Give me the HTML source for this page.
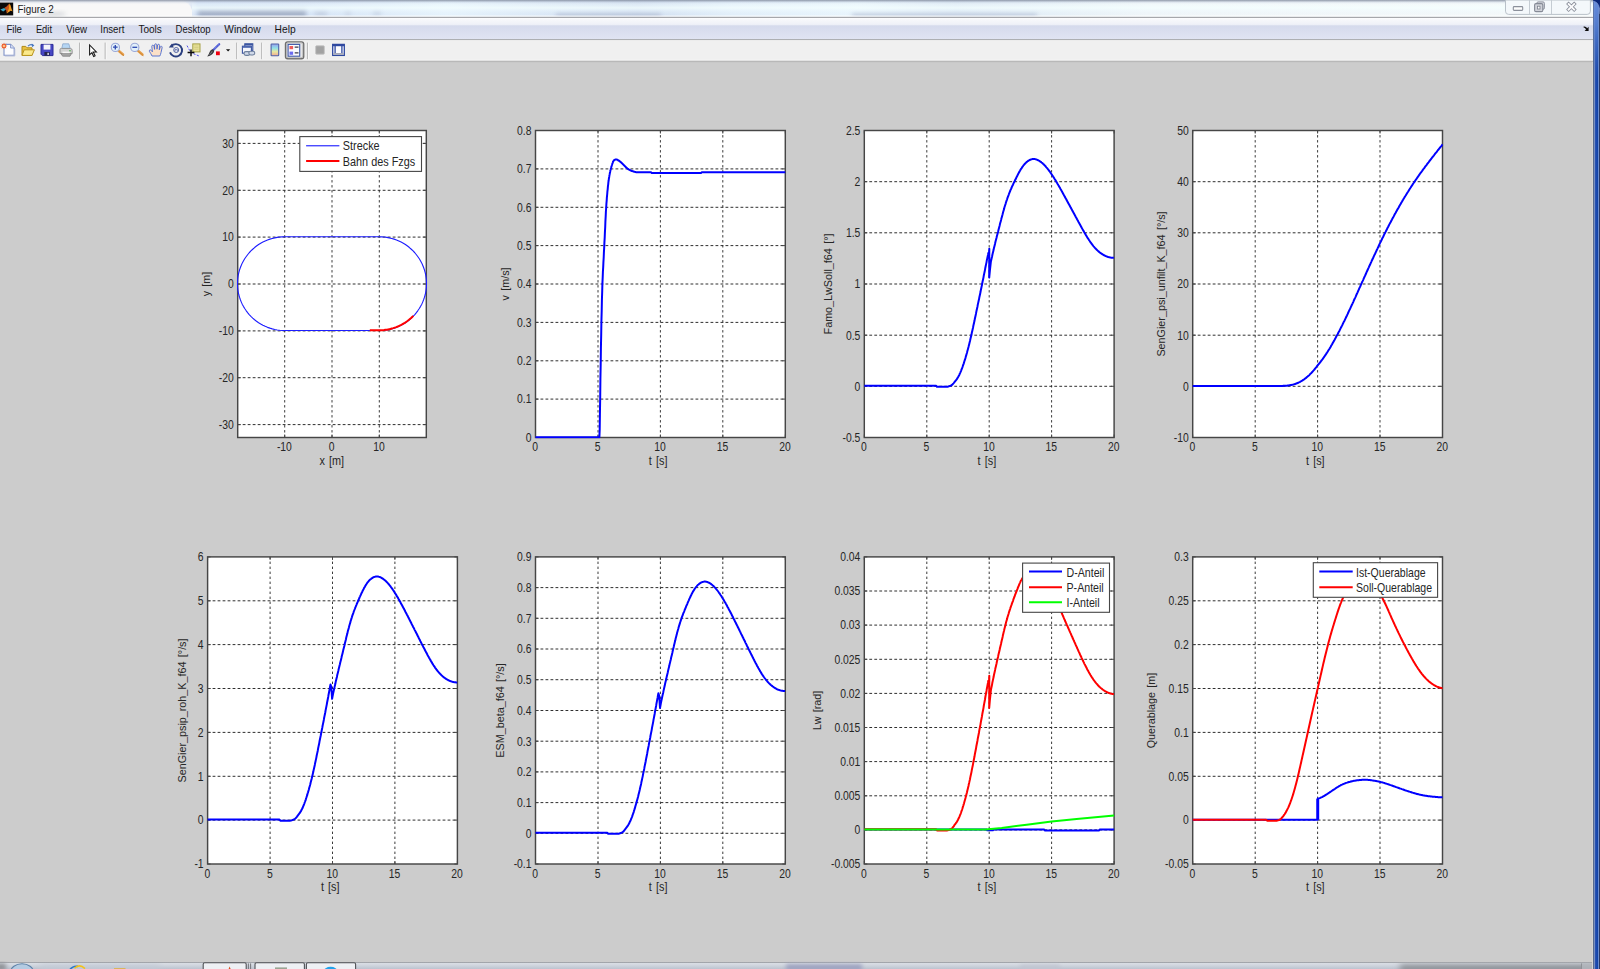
<!DOCTYPE html>
<html><head><meta charset="utf-8"><title>Figure 2</title>
<style>
html,body{margin:0;padding:0;}
body{width:1600px;height:969px;overflow:hidden;position:relative;background:#cccccc;font-family:"Liberation Sans", sans-serif;}
#plots text{white-space:pre;}

</style></head><body>
<svg id="chrome" width="1600" height="969" viewBox="0 0 1600 969" style="position:absolute;left:0;top:0" font-family='"Liberation Sans", sans-serif'>
<defs>
<linearGradient id="gtitle" x1="0" x2="1" y1="0" y2="0">
<stop offset="0" stop-color="#f9f9f9"/><stop offset="0.114" stop-color="#f8f8f8"/><stop offset="0.124" stop-color="#d3e1f5"/>
<stop offset="0.19" stop-color="#d6e4f6"/><stop offset="0.28" stop-color="#e6f3fc"/><stop offset="0.34" stop-color="#dbe8f6"/>
<stop offset="0.40" stop-color="#d2dff0"/><stop offset="0.46" stop-color="#e2effa"/><stop offset="0.54" stop-color="#e9f5fc"/>
<stop offset="0.60" stop-color="#dce8f4"/><stop offset="0.66" stop-color="#e6f0f7"/><stop offset="0.72" stop-color="#f0f6f9"/><stop offset="1" stop-color="#f6fafa"/>
</linearGradient>
<linearGradient id="gtitlev" x1="0" x2="0" y1="0" y2="1">
<stop offset="0" stop-color="#7d8798" stop-opacity="0.85"/><stop offset="0.07" stop-color="#939db0" stop-opacity="0.6"/><stop offset="0.16" stop-color="#c0ccde" stop-opacity="0.25"/><stop offset="0.3" stop-color="#fff" stop-opacity="0"/><stop offset="1" stop-color="#fff" stop-opacity="0"/>
</linearGradient>
<linearGradient id="gtitlec" x1="0" x2="0" y1="0" y2="1">
<stop offset="0" stop-color="#f4ffff" stop-opacity="0"/><stop offset="0.45" stop-color="#f4ffff" stop-opacity="0.75"/><stop offset="0.7" stop-color="#f0fbff" stop-opacity="0.35"/><stop offset="1" stop-color="#e0ecfa" stop-opacity="0"/>
</linearGradient>
<linearGradient id="grtop" x1="0" x2="0" y1="0" y2="1">
<stop offset="0" stop-color="#6a90dc" stop-opacity="0.95"/><stop offset="0.3" stop-color="#5c84d4" stop-opacity="0.85"/><stop offset="0.65" stop-color="#4a74c8" stop-opacity="0.5"/><stop offset="1" stop-color="#3a64bc" stop-opacity="0"/>
</linearGradient>
<linearGradient id="gmenu" x1="0" x2="0" y1="0" y2="1">
<stop offset="0" stop-color="#fdfdfe"/><stop offset="0.12" stop-color="#f5f6fa"/><stop offset="0.3" stop-color="#eff1f8"/><stop offset="0.37" stop-color="#d5daec"/><stop offset="1" stop-color="#e0e4f3"/>
</linearGradient>
<linearGradient id="gright" x1="0" x2="1" y1="0" y2="0">
<stop offset="0" stop-color="#6c8fd2"/><stop offset="0.2" stop-color="#4d76c8"/><stop offset="0.6" stop-color="#4870c6"/><stop offset="0.8" stop-color="#2048a8"/><stop offset="1" stop-color="#0c2c84"/>
</linearGradient>
<linearGradient id="gtask" x1="0" x2="0" y1="0" y2="1">
<stop offset="0" stop-color="#77797c"/><stop offset="0.16" stop-color="#d9dde4"/><stop offset="0.4" stop-color="#d3d8e0"/><stop offset="1" stop-color="#bcc3cf"/>
</linearGradient>
<linearGradient id="gcbar" x1="0" x2="0" y1="0" y2="1">
<stop offset="0" stop-color="#9aa0ee"/><stop offset="0.35" stop-color="#8fe0e8"/><stop offset="0.65" stop-color="#e8e8a0"/><stop offset="1" stop-color="#f0a890"/>
</linearGradient>
<filter id="b1" x="-10%" y="-100%" width="120%" height="300%"><feGaussianBlur stdDeviation="2.2"/></filter>
<filter id="b2"><feGaussianBlur stdDeviation="0.5"/></filter>
<filter id="bi"><feGaussianBlur stdDeviation="0.35"/></filter>
<filter id="b3"><feGaussianBlur stdDeviation="3"/></filter>
</defs>
<rect x="0" y="0" width="1593" height="17" fill="url(#gtitle)"/>
<path d="M0 1 H178 Q190 1 192 10 V17 H0 Z" fill="#f8f8f8" filter="url(#b2)"/>
<g filter="url(#b1)" opacity="0.9"><rect x="198" y="9.5" width="108" height="7" fill="#94a1ba"/><rect x="315" y="11" width="12" height="4" fill="#b8c4d8"/><rect x="345" y="11" width="6" height="4" fill="#c3cfe0"/><rect x="373" y="11" width="8" height="4" fill="#c0ccde"/><rect x="556" y="13" width="105" height="4" fill="#b4c0d6"/><rect x="852" y="13" width="185" height="4" fill="#b9c5d9"/></g>
<rect x="0" y="0" width="1593" height="17" fill="url(#gtitlev)"/>
<rect x="192" y="2" width="1401" height="13" fill="url(#gtitlec)"/>
<rect x="0" y="15.6" width="1593" height="1.2" fill="#ffffff" opacity="0.9"/>
<rect x="0" y="16.8" width="1593" height="1.1" fill="#a2a4a8"/>
<rect x="0" y="2.6" width="13.2" height="12.8" fill="#0a0a0a"/>
<path d="M0.3 9.6 L4.2 8.0 L6.0 9.4 L3.2 11.6 Z" fill="#3aa6c8"/>
<path d="M4.2 8.0 L6.6 6.6 L9.4 3.6 L8.6 9.2 L6.8 13.6 L6.0 9.4 Z" fill="#c8501c"/>
<path d="M9.4 3.6 Q10.6 4.6 11.6 9 L12.6 11.6 Q10.8 10.2 9.6 11.4 L6.8 13.6 Q8.8 9.6 9.4 3.6 Z" fill="#f29a1e"/>
<ellipse cx="52" cy="14" rx="14" ry="1.6" fill="#bfc3c8" opacity="0.8" filter="url(#b1)"/>
<text x="17.6" y="12.7" font-size="10.6" fill="#1a1a1a" textLength="36.2" lengthAdjust="spacingAndGlyphs">Figure 2</text>
<path d="M1505.5 0 V11.2 Q1505.5 14.4 1508.7 14.4 H1587.2 Q1590.4 14.4 1590.4 11.2 V0 Z" fill="#f4f8fb" stroke="#b9c1c9" stroke-width="1"/>
<path d="M1529.5 0 V14 M1551.5 0 V14" stroke="#c5ccd3" stroke-width="1"/>
<rect x="1513.3" y="6.6" width="9.4" height="3.8" rx="0.8" fill="#fdfdfd" stroke="#8b909b" stroke-width="1.1"/>
<rect x="1536.8" y="1.9" width="7.6" height="7.4" rx="1.4" fill="#d6d8de" stroke="#9094a0" stroke-width="1"/>
<rect x="1534.6" y="3.6" width="8.2" height="8" rx="1.4" fill="#d0d2d9" stroke="#858a96" stroke-width="1.1"/>
<rect x="1537.4" y="6.2" width="2.6" height="2.8" fill="#fdfdfd" stroke="#7b808c" stroke-width="0.8"/>
<path d="M1568.6 4.0 L1574.2 9.6 M1574.2 4.0 L1568.6 9.6" stroke="#868b97" stroke-width="3.5" stroke-linecap="square"/>
<path d="M1568.6 4.0 L1574.2 9.6 M1574.2 4.0 L1568.6 9.6" stroke="#fbfbfc" stroke-width="1.9" stroke-linecap="square"/>
<rect x="0" y="18" width="1593" height="21.3" fill="url(#gmenu)"/>
<rect x="0" y="39.1" width="1593" height="1" fill="#a9abb0"/>
<text x="6.4" y="32.6" font-size="10.6" fill="#161616" textLength="15.6" lengthAdjust="spacingAndGlyphs">File</text>
<text x="35.9" y="32.6" font-size="10.6" fill="#161616" textLength="16.1" lengthAdjust="spacingAndGlyphs">Edit</text>
<text x="66.3" y="32.6" font-size="10.6" fill="#161616" textLength="20.8" lengthAdjust="spacingAndGlyphs">View</text>
<text x="100.2" y="32.6" font-size="10.6" fill="#161616" textLength="24.2" lengthAdjust="spacingAndGlyphs">Insert</text>
<text x="138.4" y="32.6" font-size="10.6" fill="#161616" textLength="23.4" lengthAdjust="spacingAndGlyphs">Tools</text>
<text x="175.6" y="32.6" font-size="10.6" fill="#161616" textLength="35.0" lengthAdjust="spacingAndGlyphs">Desktop</text>
<text x="224.3" y="32.6" font-size="10.6" fill="#161616" textLength="36.3" lengthAdjust="spacingAndGlyphs">Window</text>
<text x="274.6" y="32.6" font-size="10.6" fill="#161616" textLength="21.0" lengthAdjust="spacingAndGlyphs">Help</text>
<path d="M1583.6 26.6 Q1586 26.2 1587.2 28.2 L1588.6 26.8 V31 H1584.6 L1586 29.5 Q1585.2 27.6 1583.6 27.6 Z" fill="#0c0c0c"/>
<rect x="0" y="40.1" width="1593" height="21" fill="#f0f0f0"/>
<rect x="0" y="59.7" width="1593" height="1" fill="#f9f9f9"/>
<rect x="0" y="60.7" width="1593" height="1.2" fill="#b4b4b4"/>
<rect x="0" y="61.9" width="1593" height="0.7" fill="#c6c6c6"/>
<rect x="79.0" y="42.6" width="1.2" height="16.6" fill="#b9b9b9"/><rect x="80.2" y="42.6" width="0.8" height="16.6" fill="#fbfbfb"/>
<rect x="104.6" y="42.6" width="1.2" height="16.6" fill="#b9b9b9"/><rect x="105.8" y="42.6" width="0.8" height="16.6" fill="#fbfbfb"/>
<rect x="236.1" y="42.6" width="1.2" height="16.6" fill="#b9b9b9"/><rect x="237.3" y="42.6" width="0.8" height="16.6" fill="#fbfbfb"/>
<rect x="261.1" y="42.6" width="1.2" height="16.6" fill="#b9b9b9"/><rect x="262.3" y="42.6" width="0.8" height="16.6" fill="#fbfbfb"/>
<rect x="306.9" y="42.6" width="1.2" height="16.6" fill="#b9b9b9"/><rect x="308.1" y="42.6" width="0.8" height="16.6" fill="#fbfbfb"/>
<g transform="translate(-0.6 0)"><g id="icons" filter="url(#bi)">
<!-- new -->
<path d="M4.6 44.4 H11.2 L14.8 48 V55.2 H4.6 Z" fill="#fdfdff" stroke="#7f92c8" stroke-width="1.1"/>
<path d="M11.2 44.4 V48 H14.8" fill="#dfe6f6" stroke="#7f92c8" stroke-width="0.9"/>
<path d="M5.4 56 H15.4 V49" fill="none" stroke="#b4bcd8" stroke-width="0.9"/>
<path d="M4.6 42.6 L5.3 44.3 L7 43.6 L6.3 45.3 L8 46 L6.3 46.7 L7 48.4 L5.3 47.7 L4.6 49.4 L3.9 47.7 L2.2 48.4 L2.9 46.7 L1.2 46 L2.9 45.3 L2.2 43.6 L3.9 44.3 Z" fill="#f0602a"/>
<circle cx="4.6" cy="46" r="1.1" fill="#ffd8a0"/>
<!-- open -->
<path d="M22.6 46.4 H26.4 L27.6 47.8 H32.6 V55.4 H22.6 Z" fill="#e8c040" stroke="#b08a18" stroke-width="1"/>
<path d="M22.6 55.4 L24.8 49.8 H35 L32.6 55.4 Z" fill="#fbe98a" stroke="#b89420" stroke-width="1"/>
<path d="M28.6 46.2 Q31 43.6 33.6 45.2" fill="none" stroke="#4a78c0" stroke-width="1.2"/>
<path d="M32.4 43.6 L35 45.4 L32.6 47.2 Z" fill="#4a78c0"/>
<!-- save -->
<path d="M41.6 44.4 H53.6 V55.6 H43 L41.6 54.2 Z" fill="#4646c4" stroke="#2c2c98" stroke-width="1"/>
<rect x="44.2" y="44.6" width="6.8" height="5" fill="#f4f4fb"/>
<rect x="45" y="52" width="5.4" height="3.6" fill="#26264e"/>
<rect x="48" y="52.8" width="1.5" height="2.2" fill="#d8d8e8"/>
<!-- print -->
<path d="M63.4 43.8 H69.4 L70.8 48.6 H62.4 Z" fill="#b6d6f4" stroke="#8aa6cc" stroke-width="0.8"/>
<path d="M60.6 49.6 Q60.6 48.4 62 48.4 H71 Q72.8 48.6 72.8 50.4 V53.6 H60.6 Z" fill="#d2d2d2" stroke="#8e8e8e" stroke-width="0.9"/>
<path d="M61.6 53.6 H72 L70.6 56.2 H63.2 Z" fill="#a8a8a8" stroke="#808080" stroke-width="0.8"/>
<rect x="63" y="51.6" width="7.4" height="1.6" fill="#f6f6f6"/>
<circle cx="70.6" cy="50.8" r="0.8" fill="#48a848"/>
<!-- pointer -->
<path d="M90.2 45 V54.8 L92.5 52.7 L94.3 56.5 L95.7 55.8 L93.9 52.1 L97 52 Z" fill="#ffffff" stroke="#141414" stroke-width="1.05" stroke-linejoin="miter"/>
<!-- zoom in -->
<path d="M119.2 50.8 L123.6 54.6" stroke="#e8a04c" stroke-width="2.6" stroke-linecap="round"/>
<path d="M119.2 50.8 L123.6 54.6" stroke="#c07a28" stroke-width="0.7" stroke-linecap="round" transform="translate(0.7 0.9)"/>
<circle cx="116" cy="47.4" r="4.1" fill="#e2f0fa" stroke="#9aa8d8" stroke-width="1.1"/>
<path d="M113.6 47.2 H118.2 M115.9 44.9 V49.5" stroke="#2c48b0" stroke-width="1.3"/>
<!-- zoom out -->
<path d="M138.6 50.8 L143 54.6" stroke="#e8a04c" stroke-width="2.6" stroke-linecap="round"/>
<path d="M138.6 50.8 L143 54.6" stroke="#c07a28" stroke-width="0.7" stroke-linecap="round" transform="translate(0.7 0.9)"/>
<circle cx="135.4" cy="47.4" r="4.1" fill="#e2f0fa" stroke="#9aa8d8" stroke-width="1.1"/>
<path d="M133 47.3 H137.8" stroke="#2c48b0" stroke-width="1.3"/>
<!-- hand -->
<path d="M152.6 56 Q151.4 53.4 150 51.4 Q149.6 50 150.8 49.8 Q152 50.2 153 51.8 L152.4 46.4 Q152.4 45.2 153.4 45.2 Q154.4 45.2 154.6 46.4 L155.2 49.4 L155.2 44.8 Q155.4 43.8 156.3 43.8 Q157.3 43.8 157.4 44.8 L157.6 49.2 L158.2 45 Q158.5 44.2 159.4 44.3 Q160.3 44.5 160.2 45.6 L159.9 49.8 L160.9 46.8 Q161.4 46 162.2 46.3 Q162.9 46.7 162.7 47.8 L161.6 52.6 Q161.2 54.6 160.4 56 Z" fill="#fbe0c8" stroke="#4a6ad0" stroke-width="0.9"/>
<!-- rotate -->
<path d="M171.8 46.2 A6.2 6.2 0 1 1 170.6 52.4" fill="none" stroke="#2c3f80" stroke-width="1.9"/>
<path d="M169.4 47.6 L174.4 47.4 L172.6 43.4 Z" fill="#2c3f80"/>
<circle cx="176.8" cy="50" r="2.5" fill="#e8ecf8" stroke="#4a5a9a" stroke-width="0.9"/>
<path d="M175.6 51.4 V49.6 H178 V51.4" fill="none" stroke="#4a5a9a" stroke-width="0.7"/>
<!-- data cursor -->
<path d="M187.6 45.6 L191.4 52.6 L200.2 56.2" fill="none" stroke="#5050e8" stroke-width="1" stroke-dasharray="2.2 1.4"/>
<rect x="193.4" y="43.9" width="7.2" height="8" fill="#ebe59a" stroke="#a4a044" stroke-width="1"/>
<path d="M194.8 46 H199.2 M194.8 47.6 H199.2 M194.8 49.2 H199.2" stroke="#c8c27a" stroke-width="0.7"/>
<path d="M188.2 52.6 H195 M191.6 49.4 V56.2" stroke="#0a0a0a" stroke-width="1.5"/>
<!-- brush -->
<path d="M219.8 44.2 L213.6 50.2" stroke="#4a58d4" stroke-width="2.2" stroke-linecap="round"/>
<path d="M219.3 44.7 L214.6 49.2" stroke="#b8c0f4" stroke-width="0.7" stroke-dasharray="1 1"/>
<path d="M213.8 49.4 Q215.4 50.4 214.6 52 Q212.4 55.8 207.8 56.4 Q209.6 54.4 210.2 52 Q211.4 49 213.8 49.4 Z" fill="#3c3c40"/>
<path d="M210 54.6 Q212 53.2 212.8 51.2" stroke="#8a8a90" stroke-width="0.7" fill="none"/>
<rect x="216.6" y="51.4" width="3.8" height="3.8" fill="#f00010"/>
<path d="M226.6 49.2 H230.8 L228.7 51.4 Z" fill="#0c0c0c"/>
<!-- link plots -->
<rect x="245.4" y="43.8" width="8" height="6.6" fill="#e6ecf8" stroke="#3a54a0" stroke-width="1.1"/>
<rect x="245.4" y="43.8" width="8" height="1.6" fill="#3a54a0"/>
<rect x="243" y="46.2" width="9" height="7" fill="#f4f6fc" stroke="#3a54a0" stroke-width="1.1"/>
<rect x="243" y="46.2" width="9" height="1.6" fill="#4660ac"/>
<rect x="244.6" y="51.6" width="6" height="3.8" rx="1.9" fill="#cfd8e8" stroke="#6d7f9c" stroke-width="1.1"/>
<rect x="249.4" y="51.2" width="6" height="3.8" rx="1.9" fill="#cfd8e8" stroke="#6d7f9c" stroke-width="1.1"/>
<g transform="translate(0.7 0)"><!-- colorbar -->
<rect x="271" y="44" width="7.6" height="11.8" rx="0.6" fill="url(#gcbar)" stroke="#4f62a6" stroke-width="1.1"/>
<!-- legend (pressed) -->
<rect x="285.4" y="41.9" width="18.2" height="16.8" rx="2.2" fill="#e6e6e6" stroke="#6e6e6e" stroke-width="1.4"/>
<rect x="286.4" y="42.9" width="16.2" height="14.8" rx="1.6" fill="none" stroke="#b4b4b4" stroke-width="0.8"/>
<rect x="288" y="44.4" width="11.6" height="11.8" fill="#fafbff" stroke="#3e58a8" stroke-width="1.1"/>
<rect x="289.4" y="46" width="3.6" height="3.2" fill="#ee5a5a"/>
<rect x="289.4" y="51.6" width="3.6" height="3.2" fill="#6a6af0"/>
<path d="M294.6 47.2 H298.4 M294.6 52.8 H298.4" stroke="#3c3c48" stroke-width="1.2"/>
<!-- hide plot tools -->
<rect x="315.6" y="45.8" width="8.6" height="8.4" rx="0.8" fill="#a2a2a2" stroke="#c4c4c4" stroke-width="0.9"/>
<!-- show plot tools -->
<rect x="332.6" y="44.4" width="11.6" height="11" fill="#fdfdff" stroke="#2f48a0" stroke-width="1.3"/>
<rect x="332.6" y="44.4" width="11.6" height="1.8" fill="#2f48a0"/>
<path d="M335 46 V53.6 M341.8 46 V53.6" stroke="#2f48a0" stroke-width="1.3"/>
<rect x="333.2" y="53" width="10.4" height="1.8" fill="#a4a8b8"/>
</g></g>
</g>
<rect x="1592" y="62" width="1.02" height="969" fill="#d5d5d3"/>
<rect x="1593" y="0" width="1.02" height="969" fill="#586a8e"/>
<rect x="1594" y="0" width="1.02" height="969" fill="#7890c0"/>
<rect x="1595" y="0" width="1.02" height="969" fill="#2852b4"/>
<rect x="1596" y="0" width="1.02" height="969" fill="#1a4aae"/>
<rect x="1597" y="0" width="1.02" height="969" fill="#1444a8"/>
<rect x="1598" y="0" width="1.02" height="969" fill="#6a8cd0"/>
<rect x="1599" y="0" width="1.02" height="969" fill="#2a3a64"/>
<rect x="1593.6" y="1" width="4.6" height="80" fill="url(#grtop)"/>
<path d="M1593 0 H1600 V14 Q1599.8 3 1594.4 1.4 L1593 1.2 Z" fill="#0a2676"/>
<path d="M1593 1.2 L1594.4 1.4 Q1599.8 3 1600 14" fill="none" stroke="#7c98d8" stroke-width="0.9"/>
<clipPath id="ctask"><rect x="0" y="961" width="1592" height="9"/></clipPath><g clip-path="url(#ctask)">
<rect x="0" y="962" width="1593" height="7" fill="url(#gtask)"/>
<g filter="url(#b1)"><rect x="-4" y="963.6" width="10" height="7" fill="#8d9094"/><rect x="786" y="964.4" width="76" height="6" fill="#9a9fbe"/><rect x="1020" y="965" width="40" height="5" fill="#c0c4d0"/></g>
<g filter="url(#b3)"><rect x="1400" y="964.6" width="200" height="8" fill="#888c92"/><rect x="40" y="965" width="120" height="6" fill="#c3cad6"/></g>
<ellipse cx="22" cy="972" rx="11.4" ry="8.2" fill="#b4cbe2" stroke="#5d82a8" stroke-width="1.1"/>
<path d="M70 969.5 Q73 965.6 78 966.4" stroke="#2a78c8" stroke-width="1.6" fill="none"/><path d="M74.5 968.2 Q79.5 963.4 85 968.6" stroke="#f2c218" stroke-width="1.5" fill="none"/>
<rect x="114" y="968" width="11.5" height="2" fill="#d9b45c"/>
<path d="M203.2 969.5 V964.2 Q203.2 962.7 204.7 962.7 H244.7 Q246.2 962.7 246.2 964.2 V969.5" fill="#eef0f4" stroke="#505256" stroke-width="1.1"/>
<path d="M255.0 969.5 V964.2 Q255.0 962.7 256.5 962.7 H302.9 Q304.4 962.7 304.4 964.2 V969.5" fill="#eef0f4" stroke="#505256" stroke-width="1.1"/>
<path d="M306.4 969.5 V964.2 Q306.4 962.7 307.9 962.7 H354.1 Q355.6 962.7 355.6 964.2 V969.5" fill="#eef0f4" stroke="#505256" stroke-width="1.1"/>
<path d="M248.4 963.4 V969.5 M250.6 963.4 V969.5" stroke="#6a6c70" stroke-width="0.9"/>
<path d="M228.6 969 L229.6 966.6 L230.6 969 Z" fill="#d8501c"/>
<rect x="275" y="967.4" width="12" height="2" fill="#9aa494" filter="url(#b2)"/>
<ellipse cx="330.6" cy="971.4" rx="7" ry="4.6" fill="#22a2ea"/>
<rect x="1581" y="963.4" width="1" height="6" fill="#8e9196"/><rect x="1582" y="963.6" width="10.5" height="6" fill="#b4b8be" opacity="0.8"/>
</g>
</svg>
<svg id="plots" width="1600" height="969" viewBox="0 0 1600 969" style="position:absolute;left:0;top:0" font-family='"Liberation Sans", sans-serif' font-size="12.0" fill="#262626"><defs><clipPath id="c1"><rect x="236.7" y="129.5" width="190.6" height="309.0"/></clipPath><clipPath id="c2"><rect x="534.5" y="129.5" width="251.8" height="309.0"/></clipPath><clipPath id="c3"><rect x="863.3" y="129.5" width="251.8" height="309.0"/></clipPath><clipPath id="c4"><rect x="1191.7" y="129.5" width="251.8" height="309.0"/></clipPath><clipPath id="c5"><rect x="206.6" y="555.9" width="251.8" height="309.1"/></clipPath><clipPath id="c6"><rect x="534.5" y="555.9" width="251.8" height="309.1"/></clipPath><clipPath id="c7"><rect x="863.3" y="555.9" width="251.8" height="309.1"/></clipPath><clipPath id="c8"><rect x="1191.7" y="555.9" width="251.8" height="309.1"/></clipPath></defs>
<g>
<rect x="237.7" y="130.5" width="188.6" height="307.0" fill="#fff"/>
<path d="M284.7 437.5 V130.5 M332.0 437.5 V130.5 M379.3 437.5 V130.5" stroke="#242424" stroke-width="1" stroke-dasharray="2.4 2.6" fill="none" opacity="0.9"/>
<path d="M237.7 424.6 H426.3 M237.7 377.7 H426.3 M237.7 330.9 H426.3 M237.7 284.0 H426.3 M237.7 237.1 H426.3 M237.7 190.3 H426.3 M237.7 143.4 H426.3" stroke="#242424" stroke-width="0.95" stroke-dasharray="2.8 2.2" fill="none"/>
<path d="M284.7 437.5 v-3 M284.7 130.5 v3 M332.0 437.5 v-3 M332.0 130.5 v3 M379.3 437.5 v-3 M379.3 130.5 v3 M237.7 424.6 h3 M426.3 424.6 h-3 M237.7 377.7 h3 M426.3 377.7 h-3 M237.7 330.9 h3 M426.3 330.9 h-3 M237.7 284.0 h3 M426.3 284.0 h-3 M237.7 237.1 h3 M426.3 237.1 h-3 M237.7 190.3 h3 M426.3 190.3 h-3 M237.7 143.4 h3 M426.3 143.4 h-3" stroke="#464646" stroke-width="1" fill="none"/>
<rect x="237.7" y="130.5" width="188.6" height="307.0" fill="none" stroke="#464646" stroke-width="1.45"/>
<g clip-path="url(#c1)"><g transform="translate(0 -0.35)"><path d="M284.7 330.9 L379.3 330.9 L379.3 330.9 L381.8 330.8 L384.3 330.6 L386.8 330.3 L389.3 329.8 L391.7 329.2 L394.1 328.5 L396.5 327.7 L398.8 326.7 L401.1 325.6 L403.3 324.4 L405.4 323.1 L407.5 321.6 L409.4 320.1 L411.3 318.4 L413.1 316.7 L414.8 314.9 L416.4 312.9 L417.9 310.9 L419.3 308.9 L420.6 306.7 L421.8 304.5 L422.8 302.2 L423.7 299.9 L424.5 297.5 L425.2 295.1 L425.7 292.7 L426.1 290.2 L426.4 287.7 L426.5 285.2 L426.5 282.8 L426.4 280.3 L426.1 277.8 L425.7 275.3 L425.2 272.9 L424.5 270.5 L423.7 268.1 L422.8 265.8 L421.8 263.5 L420.6 261.3 L419.3 259.1 L417.9 257.1 L416.4 255.1 L414.8 253.1 L413.1 251.3 L411.3 249.6 L409.4 247.9 L407.5 246.4 L405.4 244.9 L403.3 243.6 L401.1 242.4 L398.8 241.3 L396.5 240.3 L394.1 239.5 L391.7 238.8 L389.3 238.2 L386.8 237.7 L384.3 237.4 L381.8 237.2 L379.3 237.1 L379.3 237.1 L284.7 237.1 L284.7 237.1 L282.2 237.2 L279.7 237.4 L277.2 237.7 L274.7 238.2 L272.3 238.8 L269.9 239.5 L267.5 240.3 L265.2 241.3 L262.9 242.4 L260.7 243.6 L258.6 244.9 L256.5 246.4 L254.6 247.9 L252.7 249.6 L250.9 251.3 L249.2 253.1 L247.6 255.1 L246.1 257.1 L244.7 259.1 L243.4 261.3 L242.2 263.5 L241.2 265.8 L240.3 268.1 L239.5 270.5 L238.8 272.9 L238.3 275.3 L237.9 277.8 L237.6 280.3 L237.5 282.8 L237.5 285.2 L237.6 287.7 L237.9 290.2 L238.3 292.7 L238.8 295.1 L239.5 297.5 L240.3 299.9 L241.2 302.2 L242.2 304.5 L243.4 306.7 L244.7 308.9 L246.1 310.9 L247.6 312.9 L249.2 314.9 L250.9 316.7 L252.7 318.4 L254.6 320.1 L256.5 321.6 L258.6 323.1 L260.7 324.4 L262.9 325.6 L265.2 326.7 L267.5 327.7 L269.9 328.5 L272.3 329.2 L274.7 329.8 L277.2 330.3 L279.7 330.6 L282.2 330.8 L284.7 330.9 L284.7 330.9" fill="none" stroke="#1c1cff" stroke-width="1.12" stroke-linejoin="round"/><path d="M369.8 330.6 L379.3 330.6 L379.3 330.6 L380.9 330.6 L382.4 330.5 L384.0 330.4 L385.6 330.2 L387.2 330.0 L388.7 329.7 L390.3 329.3 L391.8 328.9 L393.3 328.5 L394.8 328.0 L396.3 327.5 L397.8 326.9 L399.2 326.2 L400.7 325.5 L402.1 324.8 L403.4 324.0 L404.8 323.2 L406.1 322.3 L407.4 321.4 L408.7 320.4 L409.9 319.4 L411.1 318.4 L412.2 317.3 L413.3 316.2" fill="none" stroke="#ff0000" stroke-width="2.0" stroke-linejoin="round"/></g></g>
<text transform="translate(284.4 451.0) scale(0.81 1)" text-anchor="middle" font-size="12.8">-10</text>
<text transform="translate(331.7 451.0) scale(0.81 1)" text-anchor="middle" font-size="12.8">0</text>
<text transform="translate(379.0 451.0) scale(0.81 1)" text-anchor="middle" font-size="12.8">10</text>
<text transform="translate(233.7 428.9) scale(0.81 1)" text-anchor="end" font-size="12.8">-30</text>
<text transform="translate(233.7 382.0) scale(0.81 1)" text-anchor="end" font-size="12.8">-20</text>
<text transform="translate(233.7 335.2) scale(0.81 1)" text-anchor="end" font-size="12.8">-10</text>
<text transform="translate(233.7 288.3) scale(0.81 1)" text-anchor="end" font-size="12.8">0</text>
<text transform="translate(233.7 241.4) scale(0.81 1)" text-anchor="end" font-size="12.8">10</text>
<text transform="translate(233.7 194.6) scale(0.81 1)" text-anchor="end" font-size="12.8">20</text>
<text transform="translate(233.7 147.7) scale(0.81 1)" text-anchor="end" font-size="12.8">30</text>
<text transform="translate(331.7 464.7) scale(0.905 1)" text-anchor="middle" word-spacing="1.2">x [m]</text>
<text transform="translate(210.1 284.0) rotate(-90) scale(0.955 1)" text-anchor="middle" font-size="11.3" word-spacing="1.4">y [m]</text>
<rect x="299.8" y="136.6" width="121.7" height="34.8" fill="#fff" stroke="#464646" stroke-width="1.1"/>
<path d="M306.1 145.8 H339.4" stroke="#0000ff" stroke-width="1.0"/>
<text transform="translate(342.8 150.0) scale(0.905 1)" text-anchor="start">Strecke</text>
<path d="M306.1 161.1 H339.4" stroke="#ff0000" stroke-width="2.0"/>
<text transform="translate(342.8 166.1) scale(0.905 1)" text-anchor="start">Bahn des Fzgs</text>
</g>
<g>
<rect x="535.5" y="130.5" width="249.8" height="307.0" fill="#fff"/>
<path d="M598.0 437.5 V130.5 M660.4 437.5 V130.5 M722.8 437.5 V130.5" stroke="#242424" stroke-width="1" stroke-dasharray="2.4 2.6" fill="none" opacity="0.9"/>
<path d="M535.5 399.1 H785.3 M535.5 360.8 H785.3 M535.5 322.4 H785.3 M535.5 284.0 H785.3 M535.5 245.6 H785.3 M535.5 207.3 H785.3 M535.5 168.9 H785.3" stroke="#242424" stroke-width="0.95" stroke-dasharray="2.8 2.2" fill="none"/>
<path d="M535.5 437.5 v-3 M535.5 130.5 v3 M598.0 437.5 v-3 M598.0 130.5 v3 M660.4 437.5 v-3 M660.4 130.5 v3 M722.8 437.5 v-3 M722.8 130.5 v3 M785.3 437.5 v-3 M785.3 130.5 v3 M535.5 437.5 h3 M785.3 437.5 h-3 M535.5 399.1 h3 M785.3 399.1 h-3 M535.5 360.8 h3 M785.3 360.8 h-3 M535.5 322.4 h3 M785.3 322.4 h-3 M535.5 284.0 h3 M785.3 284.0 h-3 M535.5 245.6 h3 M785.3 245.6 h-3 M535.5 207.3 h3 M785.3 207.3 h-3 M535.5 168.9 h3 M785.3 168.9 h-3 M535.5 130.5 h3 M785.3 130.5 h-3" stroke="#464646" stroke-width="1" fill="none"/>
<rect x="535.5" y="130.5" width="249.8" height="307.0" fill="none" stroke="#464646" stroke-width="1.45"/>
<g clip-path="url(#c2)"><g transform="translate(0 -0.35)"><path d="M535.5 437.5 L541.7 437.5 L548.0 437.5 L554.2 437.5 L560.5 437.5 L566.7 437.5 L573.0 437.5 L579.2 437.5 L585.5 437.5 L591.7 437.5 L598.0 437.5 L599.2 437.5 L599.4 437.5 L599.7 429.8 L599.9 415.9 L600.2 397.6 L600.4 379.9 L600.7 364.4 L600.9 349.2 L601.2 334.9 L601.4 322.4 L601.7 311.2 L601.9 300.8 L602.2 291.7 L602.4 284.0 L602.7 277.7 L602.9 272.3 L603.2 267.5 L603.4 262.8 L603.7 257.9 L603.9 252.9 L604.2 247.9 L604.4 243.0 L604.7 238.0 L604.9 233.0 L605.2 227.6 L605.4 221.9 L605.7 216.5 L605.9 211.9 L606.2 207.9 L606.4 204.2 L606.7 200.7 L606.9 197.5 L607.2 194.6 L607.4 191.9 L607.7 189.4 L607.9 186.9 L608.2 184.7 L608.4 182.5 L608.7 180.6 L608.9 178.9 L609.2 177.3 L609.4 175.9 L609.7 174.5 L609.9 173.2 L610.2 172.0 L610.4 170.8 L610.7 169.8 L610.9 168.8 L611.2 167.8 L611.4 167.0 L611.7 166.2 L611.9 165.4 L612.2 164.6 L612.4 163.9 L612.7 163.2 L612.9 162.5 L613.2 161.9 L613.4 161.4 L613.7 161.0 L613.9 160.7 L614.2 160.5 L614.4 160.4 L614.7 160.2 L614.9 160.1 L615.2 160.0 L615.4 159.9 L615.7 159.8 L615.9 159.8 L616.2 159.8 L616.4 159.8 L616.7 159.9 L616.9 159.9 L617.2 160.0 L617.4 160.2 L617.7 160.3 L617.9 160.4 L618.2 160.6 L618.4 160.8 L618.7 160.9 L618.9 161.1 L619.2 161.3 L619.4 161.5 L619.7 161.7 L619.9 161.8 L620.2 162.0 L620.4 162.2 L620.7 162.4 L620.9 162.6 L621.2 162.9 L621.4 163.1 L621.7 163.3 L621.9 163.6 L622.2 163.8 L622.4 164.1 L622.7 164.3 L622.9 164.6 L623.2 164.8 L623.4 165.1 L623.7 165.3 L623.9 165.6 L624.2 165.8 L624.4 166.1 L624.7 166.3 L624.9 166.6 L625.2 166.8 L625.4 167.1 L625.7 167.3 L625.9 167.6 L626.2 167.8 L626.4 168.1 L626.7 168.3 L626.9 168.5 L627.2 168.7 L627.4 168.9 L627.7 169.1 L627.9 169.3 L628.2 169.5 L628.4 169.6 L628.7 169.8 L628.9 169.9 L629.2 170.0 L629.4 170.2 L629.7 170.3 L629.9 170.5 L630.2 170.6 L630.4 170.7 L630.7 170.8 L630.9 170.9 L631.2 171.0 L631.4 171.2 L631.7 171.3 L631.9 171.3 L632.2 171.4 L632.4 171.5 L632.7 171.6 L632.9 171.7 L633.2 171.7 L633.4 171.8 L633.7 171.9 L633.9 172.0 L634.2 172.0 L634.4 172.1 L634.7 172.2 L634.9 172.2 L635.2 172.3 L635.4 172.4 L635.7 172.4 L635.9 172.5 L636.2 172.5 L636.4 172.6 L636.7 172.6 L636.9 172.6 L637.2 172.7 L637.4 172.7 L637.7 172.7 L637.9 172.7 L638.2 172.7 L638.4 172.7 L638.7 172.7 L638.9 172.7 L639.2 172.7 L639.4 172.7 L639.7 172.7 L639.9 172.7 L640.2 172.7 L640.4 172.7 L640.7 172.7 L640.9 172.7 L641.2 172.7 L641.4 172.7 L641.7 172.7 L641.9 172.7 L642.2 172.7 L642.4 172.7 L642.7 172.7 L642.9 172.7 L643.2 172.7 L643.4 172.7 L643.7 172.7 L643.9 172.7 L644.2 172.7 L644.4 172.7 L644.7 172.7 L644.9 172.7 L645.2 172.7 L645.4 172.7 L645.7 172.7 L645.9 172.7 L646.2 172.7 L646.4 172.7 L646.7 172.7 L646.9 172.7 L647.2 172.7 L647.4 172.7 L647.7 172.7 L647.9 172.7 L648.5 172.7 L649.2 172.7 L649.8 172.7 L650.4 172.7 L651.0 172.7 L651.7 173.3 L652.3 173.3 L652.9 173.3 L653.5 173.3 L654.2 173.3 L654.8 173.3 L655.4 173.3 L656.0 173.3 L656.7 173.3 L657.3 173.3 L657.9 173.3 L658.5 173.3 L659.2 173.3 L659.8 173.3 L660.4 173.3 L661.0 173.3 L661.6 173.3 L662.3 173.3 L662.9 173.3 L663.5 173.3 L664.1 173.3 L664.8 173.3 L665.4 173.3 L666.0 173.3 L666.6 173.3 L667.3 173.3 L667.9 173.3 L668.5 173.3 L669.1 173.3 L669.8 173.3 L670.4 173.3 L671.0 173.3 L671.6 173.3 L672.3 173.3 L672.9 173.3 L673.5 173.3 L674.1 173.3 L674.8 173.3 L675.4 173.3 L676.0 173.3 L676.6 173.3 L677.3 173.3 L677.9 173.3 L678.5 173.3 L679.1 173.3 L679.8 173.3 L680.4 173.3 L681.0 173.3 L681.6 173.3 L682.3 173.3 L682.9 173.3 L683.5 173.3 L684.1 173.3 L684.8 173.3 L685.4 173.3 L686.0 173.3 L686.6 173.3 L687.3 173.3 L687.9 173.3 L688.5 173.3 L689.1 173.3 L689.8 173.3 L690.4 173.3 L691.0 173.3 L691.6 173.3 L692.2 173.3 L692.9 173.3 L693.5 173.3 L694.1 173.3 L694.7 173.3 L695.4 173.3 L696.0 173.3 L696.6 173.3 L697.2 173.3 L697.9 173.3 L698.5 173.3 L699.1 173.3 L699.7 173.3 L700.4 173.3 L701.0 173.3 L701.6 172.7 L702.2 172.7 L702.9 172.7 L703.5 172.7 L704.1 172.7 L704.7 172.7 L705.4 172.7 L706.0 172.7 L706.6 172.7 L707.2 172.7 L707.9 172.7 L708.5 172.7 L709.1 172.7 L709.7 172.7 L710.4 172.7 L711.0 172.7 L711.6 172.7 L712.2 172.7 L712.9 172.7 L713.5 172.7 L714.1 172.7 L714.7 172.7 L715.4 172.7 L716.0 172.7 L716.6 172.7 L717.2 172.7 L717.9 172.7 L718.5 172.7 L719.1 172.7 L719.7 172.7 L720.4 172.7 L721.0 172.7 L721.6 172.7 L722.2 172.7 L722.9 172.7 L723.5 172.7 L724.1 172.7 L724.7 172.7 L725.3 172.7 L726.0 172.7 L726.6 172.7 L727.2 172.7 L727.8 172.7 L728.5 172.7 L729.1 172.7 L729.7 172.7 L730.3 172.7 L731.0 172.7 L731.6 172.7 L732.2 172.7 L732.8 172.7 L733.5 172.7 L734.1 172.7 L734.7 172.7 L735.3 172.7 L736.0 172.7 L736.6 172.7 L737.2 172.7 L737.8 172.7 L738.5 172.7 L739.1 172.7 L739.7 172.7 L740.3 172.7 L741.0 172.7 L741.6 172.7 L742.2 172.7 L742.8 172.7 L743.5 172.7 L744.1 172.7 L744.7 172.7 L745.3 172.7 L746.0 172.7 L746.6 172.7 L747.2 172.7 L747.8 172.7 L748.5 172.7 L749.1 172.7 L749.7 172.7 L750.3 172.7 L751.0 172.7 L751.6 172.7 L752.2 172.7 L752.8 172.7 L753.5 172.7 L754.1 172.7 L754.7 172.7 L755.3 172.7 L755.9 172.7 L756.6 172.7 L757.2 172.7 L757.8 172.7 L758.4 172.7 L759.1 172.7 L759.7 172.7 L760.3 172.7 L760.9 172.7 L761.6 172.7 L762.2 172.7 L762.8 172.7 L763.4 172.7 L764.1 172.7 L764.7 172.7 L765.3 172.7 L765.9 172.7 L766.6 172.7 L767.2 172.7 L767.8 172.7 L768.4 172.7 L769.1 172.7 L769.7 172.7 L770.3 172.7 L770.9 172.7 L771.6 172.7 L772.2 172.7 L772.8 172.7 L773.4 172.7 L774.1 172.7 L774.7 172.7 L775.3 172.7 L775.9 172.7 L776.6 172.7 L777.2 172.7 L777.8 172.7 L778.4 172.7 L779.1 172.7 L779.7 172.7 L780.3 172.7 L780.9 172.7 L781.6 172.7 L782.2 172.7 L782.8 172.7 L783.4 172.7 L784.1 172.7 L784.7 172.7 L785.3 172.7" fill="none" stroke="#0000ff" stroke-width="2.0" stroke-linejoin="round"/></g></g>
<text transform="translate(535.2 451.0) scale(0.81 1)" text-anchor="middle" font-size="12.8">0</text>
<text transform="translate(597.7 451.0) scale(0.81 1)" text-anchor="middle" font-size="12.8">5</text>
<text transform="translate(660.1 451.0) scale(0.81 1)" text-anchor="middle" font-size="12.8">10</text>
<text transform="translate(722.5 451.0) scale(0.81 1)" text-anchor="middle" font-size="12.8">15</text>
<text transform="translate(785.0 451.0) scale(0.81 1)" text-anchor="middle" font-size="12.8">20</text>
<text transform="translate(531.5 441.8) scale(0.81 1)" text-anchor="end" font-size="12.8">0</text>
<text transform="translate(531.5 403.4) scale(0.81 1)" text-anchor="end" font-size="12.8">0.1</text>
<text transform="translate(531.5 365.1) scale(0.81 1)" text-anchor="end" font-size="12.8">0.2</text>
<text transform="translate(531.5 326.7) scale(0.81 1)" text-anchor="end" font-size="12.8">0.3</text>
<text transform="translate(531.5 288.3) scale(0.81 1)" text-anchor="end" font-size="12.8">0.4</text>
<text transform="translate(531.5 249.9) scale(0.81 1)" text-anchor="end" font-size="12.8">0.5</text>
<text transform="translate(531.5 211.6) scale(0.81 1)" text-anchor="end" font-size="12.8">0.6</text>
<text transform="translate(531.5 173.2) scale(0.81 1)" text-anchor="end" font-size="12.8">0.7</text>
<text transform="translate(531.5 134.8) scale(0.81 1)" text-anchor="end" font-size="12.8">0.8</text>
<text transform="translate(658.1 464.7) scale(0.905 1)" text-anchor="middle" word-spacing="1.2">t [s]</text>
<text transform="translate(508.6 284.0) rotate(-90) scale(0.955 1)" text-anchor="middle" font-size="11.3" word-spacing="1.4">v [m/s]</text>
</g>
<g>
<rect x="864.3" y="130.5" width="249.8" height="307.0" fill="#fff"/>
<path d="M926.8 437.5 V130.5 M989.2 437.5 V130.5 M1051.6 437.5 V130.5" stroke="#242424" stroke-width="1" stroke-dasharray="2.4 2.6" fill="none" opacity="0.9"/>
<path d="M864.3 386.3 H1114.1 M864.3 335.2 H1114.1 M864.3 284.0 H1114.1 M864.3 232.8 H1114.1 M864.3 181.7 H1114.1" stroke="#242424" stroke-width="0.95" stroke-dasharray="2.8 2.2" fill="none"/>
<path d="M864.3 437.5 v-3 M864.3 130.5 v3 M926.8 437.5 v-3 M926.8 130.5 v3 M989.2 437.5 v-3 M989.2 130.5 v3 M1051.6 437.5 v-3 M1051.6 130.5 v3 M1114.1 437.5 v-3 M1114.1 130.5 v3 M864.3 437.5 h3 M1114.1 437.5 h-3 M864.3 386.3 h3 M1114.1 386.3 h-3 M864.3 335.2 h3 M1114.1 335.2 h-3 M864.3 284.0 h3 M1114.1 284.0 h-3 M864.3 232.8 h3 M1114.1 232.8 h-3 M864.3 181.7 h3 M1114.1 181.7 h-3 M864.3 130.5 h3 M1114.1 130.5 h-3" stroke="#464646" stroke-width="1" fill="none"/>
<rect x="864.3" y="130.5" width="249.8" height="307.0" fill="none" stroke="#464646" stroke-width="1.45"/>
<g clip-path="url(#c3)"><g transform="translate(0 -0.35)"><path d="M864.3 386.1 L864.7 386.1 L865.0 386.1 L865.4 386.1 L865.8 386.1 L866.2 386.1 L866.5 386.1 L866.9 386.1 L867.3 386.1 L867.7 386.1 L868.0 386.1 L868.4 386.1 L868.8 386.1 L869.2 386.1 L869.5 386.1 L869.9 386.1 L870.3 386.1 L870.7 386.1 L871.0 386.1 L871.4 386.1 L871.8 386.1 L872.2 386.1 L872.5 386.1 L872.9 386.1 L873.3 386.1 L873.7 386.1 L874.0 386.1 L874.4 386.1 L874.8 386.1 L875.2 386.1 L875.5 386.1 L875.9 386.1 L876.3 386.1 L876.7 386.1 L877.0 386.1 L877.4 386.1 L877.8 386.1 L878.2 386.1 L878.5 386.1 L878.9 386.1 L879.3 386.1 L879.7 386.1 L880.0 386.1 L880.4 386.1 L880.8 386.1 L881.2 386.1 L881.5 386.1 L881.9 386.1 L882.3 386.1 L882.7 386.1 L883.0 386.1 L883.4 386.1 L883.8 386.1 L884.2 386.1 L884.5 386.1 L884.9 386.1 L885.3 386.1 L885.7 386.1 L886.0 386.1 L886.4 386.1 L886.8 386.1 L887.2 386.1 L887.5 386.1 L887.9 386.1 L888.3 386.1 L888.7 386.1 L889.0 386.1 L889.4 386.1 L889.8 386.1 L890.2 386.1 L890.5 386.1 L890.9 386.1 L891.3 386.1 L891.7 386.1 L892.0 386.1 L892.4 386.1 L892.8 386.1 L893.2 386.1 L893.5 386.1 L893.9 386.1 L894.3 386.1 L894.7 386.1 L895.0 386.1 L895.4 386.1 L895.8 386.1 L896.1 386.1 L896.5 386.1 L896.9 386.1 L897.3 386.1 L897.6 386.1 L898.0 386.1 L898.4 386.1 L898.8 386.1 L899.1 386.1 L899.5 386.1 L899.9 386.1 L900.3 386.1 L900.6 386.1 L901.0 386.1 L901.4 386.1 L901.8 386.1 L902.1 386.1 L902.5 386.1 L902.9 386.1 L903.3 386.1 L903.6 386.1 L904.0 386.1 L904.4 386.1 L904.8 386.1 L905.1 386.1 L905.5 386.1 L905.9 386.1 L906.3 386.1 L906.6 386.1 L907.0 386.1 L907.4 386.1 L907.8 386.1 L908.1 386.1 L908.5 386.1 L908.9 386.1 L909.3 386.1 L909.6 386.1 L910.0 386.1 L910.4 386.1 L910.8 386.1 L911.1 386.1 L911.5 386.1 L911.9 386.1 L912.3 386.1 L912.6 386.1 L913.0 386.1 L913.4 386.1 L913.8 386.1 L914.1 386.1 L914.5 386.1 L914.9 386.1 L915.3 386.1 L915.6 386.1 L916.0 386.1 L916.4 386.1 L916.8 386.1 L917.1 386.1 L917.5 386.1 L917.9 386.1 L918.3 386.1 L918.6 386.1 L919.0 386.1 L919.4 386.1 L919.8 386.1 L920.1 386.1 L920.5 386.1 L920.9 386.1 L921.3 386.1 L921.6 386.1 L922.0 386.1 L922.4 386.1 L922.8 386.1 L923.1 386.1 L923.5 386.1 L923.9 386.1 L924.3 386.1 L924.6 386.1 L925.0 386.1 L925.4 386.1 L925.8 386.1 L926.1 386.1 L926.5 386.1 L926.9 386.1 L927.2 386.1 L927.6 386.1 L928.0 386.1 L928.4 386.1 L928.7 386.1 L929.1 386.1 L929.5 386.1 L929.9 386.1 L930.2 386.1 L930.6 386.1 L931.0 386.1 L931.4 386.1 L931.7 386.1 L932.1 386.1 L932.5 386.1 L932.9 386.1 L933.2 386.1 L933.6 386.1 L934.0 386.1 L934.4 386.1 L934.7 386.1 L935.1 386.1 L935.5 386.1 L935.9 386.1 L936.2 386.1 L936.6 386.6 L937.0 387.2 L937.4 387.2 L937.7 387.2 L938.1 387.2 L938.5 387.2 L938.9 387.2 L939.2 387.2 L939.6 387.2 L940.0 387.2 L940.4 387.2 L940.7 387.2 L941.1 387.2 L941.5 387.2 L941.9 387.2 L942.2 387.2 L942.6 387.2 L943.0 387.2 L943.4 387.2 L943.7 387.2 L944.1 387.2 L944.5 387.2 L944.9 387.2 L945.2 387.2 L945.6 387.2 L946.0 387.2 L946.4 387.2 L946.7 387.2 L947.1 387.1 L947.5 387.1 L947.9 387.0 L948.2 386.9 L948.6 386.8 L949.0 386.6 L949.4 386.5 L949.7 386.4 L950.1 386.2 L950.5 386.1 L950.9 385.9 L951.2 385.7 L951.6 385.5 L952.0 385.2 L952.4 384.9 L952.7 384.5 L953.1 384.1 L953.5 383.7 L953.9 383.2 L954.2 382.7 L954.6 382.3 L955.0 381.8 L955.4 381.4 L955.7 380.9 L956.1 380.5 L956.5 379.9 L956.9 379.4 L957.2 378.8 L957.6 378.2 L958.0 377.6 L958.3 377.0 L958.7 376.3 L959.1 375.6 L959.5 374.8 L959.8 374.0 L960.2 373.2 L960.6 372.3 L961.0 371.4 L961.3 370.5 L961.7 369.5 L962.1 368.5 L962.5 367.4 L962.8 366.4 L963.2 365.3 L963.6 364.2 L964.0 363.0 L964.3 361.9 L964.7 360.7 L965.1 359.5 L965.5 358.2 L965.8 357.0 L966.2 355.7 L966.6 354.4 L967.0 353.1 L967.3 351.7 L967.7 350.3 L968.1 348.9 L968.5 347.4 L968.8 346.0 L969.2 344.5 L969.6 342.9 L970.0 341.4 L970.3 339.8 L970.7 338.2 L971.1 336.5 L971.5 334.9 L971.8 333.2 L972.2 331.5 L972.6 329.8 L973.0 328.1 L973.3 326.4 L973.7 324.7 L974.1 322.9 L974.5 321.2 L974.8 319.4 L975.2 317.6 L975.6 315.8 L976.0 314.0 L976.3 312.2 L976.7 310.4 L977.1 308.6 L977.5 306.8 L977.8 305.0 L978.2 303.2 L978.6 301.4 L979.0 299.7 L979.3 297.9 L979.7 296.1 L980.1 294.3 L980.5 292.4 L980.8 290.6 L981.2 288.8 L981.6 287.0 L982.0 285.2 L982.3 283.3 L982.7 281.4 L983.1 279.6 L983.5 277.7 L983.8 275.8 L984.2 274.0 L984.6 272.1 L985.0 270.2 L985.3 268.3 L985.7 266.4 L986.1 264.5 L986.5 262.7 L986.8 260.8 L987.2 259.0 L987.6 257.1 L988.0 255.3 L988.3 253.4 L989.1 252.8 L989.3 249.0 L989.2 277.9 L989.9 270.7 L990.9 261.8 L991.3 260.1 L991.7 258.4 L992.1 256.8 L992.4 255.1 L992.8 253.4 L993.2 251.8 L993.6 250.2 L993.9 248.6 L994.3 247.0 L994.7 245.5 L995.1 243.9 L995.4 242.4 L995.8 240.9 L996.2 239.4 L996.6 237.9 L996.9 236.4 L997.3 235.0 L997.7 233.5 L998.1 232.0 L998.4 230.6 L998.8 229.1 L999.2 227.6 L999.6 226.1 L999.9 224.7 L1000.3 223.2 L1000.7 221.8 L1001.1 220.3 L1001.4 218.9 L1001.8 217.5 L1002.2 216.0 L1002.6 214.6 L1002.9 213.3 L1003.3 211.9 L1003.7 210.5 L1004.1 209.2 L1004.4 207.9 L1004.8 206.6 L1005.2 205.4 L1005.6 204.2 L1005.9 203.0 L1006.3 201.8 L1006.7 200.7 L1007.1 199.6 L1007.4 198.5 L1007.8 197.4 L1008.2 196.4 L1008.6 195.4 L1008.9 194.4 L1009.3 193.4 L1009.7 192.5 L1010.1 191.6 L1010.4 190.7 L1010.8 189.8 L1011.2 189.0 L1011.6 188.1 L1011.9 187.3 L1012.3 186.4 L1012.7 185.6 L1013.1 184.8 L1013.4 184.0 L1013.8 183.2 L1014.2 182.4 L1014.6 181.6 L1014.9 180.9 L1015.3 180.1 L1015.7 179.3 L1016.1 178.6 L1016.4 177.8 L1016.8 177.0 L1017.2 176.3 L1017.6 175.6 L1017.9 174.8 L1018.3 174.1 L1018.7 173.4 L1019.1 172.7 L1019.4 172.1 L1019.8 171.4 L1020.2 170.8 L1020.5 170.1 L1020.9 169.5 L1021.3 168.9 L1021.7 168.4 L1022.0 167.8 L1022.4 167.2 L1022.8 166.7 L1023.2 166.2 L1023.5 165.7 L1023.9 165.3 L1024.3 164.8 L1024.7 164.4 L1025.0 164.0 L1025.4 163.6 L1025.8 163.2 L1026.2 162.8 L1026.5 162.5 L1026.9 162.2 L1027.3 161.9 L1027.7 161.6 L1028.0 161.3 L1028.4 161.1 L1028.8 160.9 L1029.2 160.6 L1029.5 160.4 L1029.9 160.3 L1030.3 160.1 L1030.7 159.9 L1031.0 159.8 L1031.4 159.7 L1031.8 159.6 L1032.2 159.5 L1032.5 159.4 L1032.9 159.4 L1033.3 159.3 L1033.7 159.3 L1034.0 159.3 L1034.4 159.4 L1034.8 159.4 L1035.2 159.5 L1035.5 159.6 L1035.9 159.7 L1036.3 159.8 L1036.7 159.9 L1037.0 160.1 L1037.4 160.2 L1037.8 160.4 L1038.2 160.6 L1038.5 160.8 L1038.9 161.0 L1039.3 161.2 L1039.7 161.5 L1040.0 161.7 L1040.4 162.0 L1040.8 162.2 L1041.2 162.5 L1041.5 162.8 L1041.9 163.1 L1042.3 163.4 L1042.7 163.8 L1043.0 164.1 L1043.4 164.4 L1043.8 164.8 L1044.2 165.2 L1044.5 165.6 L1044.9 166.0 L1045.3 166.4 L1045.7 166.8 L1046.0 167.2 L1046.4 167.7 L1046.8 168.1 L1047.2 168.6 L1047.5 169.0 L1047.9 169.5 L1048.3 170.0 L1048.7 170.5 L1049.0 171.0 L1049.4 171.5 L1049.8 172.0 L1050.2 172.5 L1050.5 173.0 L1050.9 173.6 L1051.3 174.1 L1051.6 174.7 L1052.0 175.2 L1052.4 175.8 L1052.8 176.4 L1053.1 176.9 L1053.5 177.5 L1053.9 178.1 L1054.3 178.7 L1054.6 179.3 L1055.0 179.9 L1055.4 180.5 L1055.8 181.1 L1056.1 181.8 L1056.5 182.4 L1056.9 183.0 L1057.3 183.7 L1057.6 184.3 L1058.0 184.9 L1058.4 185.6 L1058.8 186.2 L1059.1 186.9 L1059.5 187.5 L1059.9 188.2 L1060.3 188.9 L1060.6 189.5 L1061.0 190.2 L1061.4 190.9 L1061.8 191.5 L1062.1 192.2 L1062.5 192.9 L1062.9 193.6 L1063.3 194.3 L1063.6 194.9 L1064.0 195.6 L1064.4 196.3 L1064.8 197.0 L1065.1 197.7 L1065.5 198.3 L1065.9 199.0 L1066.3 199.7 L1066.6 200.4 L1067.0 201.1 L1067.4 201.8 L1067.8 202.5 L1068.1 203.2 L1068.5 203.8 L1068.9 204.5 L1069.3 205.2 L1069.6 205.9 L1070.0 206.6 L1070.4 207.3 L1070.8 208.0 L1071.1 208.7 L1071.5 209.4 L1071.9 210.1 L1072.3 210.8 L1072.6 211.5 L1073.0 212.1 L1073.4 212.8 L1073.8 213.5 L1074.1 214.2 L1074.5 214.9 L1074.9 215.6 L1075.3 216.3 L1075.6 217.0 L1076.0 217.7 L1076.4 218.4 L1076.8 219.1 L1077.1 219.8 L1077.5 220.4 L1077.9 221.1 L1078.3 221.8 L1078.6 222.5 L1079.0 223.2 L1079.4 223.9 L1079.8 224.6 L1080.1 225.2 L1080.5 225.9 L1080.9 226.6 L1081.3 227.3 L1081.6 227.9 L1082.0 228.6 L1082.4 229.3 L1082.8 229.9 L1083.1 230.6 L1083.5 231.2 L1083.9 231.9 L1084.2 232.5 L1084.6 233.2 L1085.0 233.8 L1085.4 234.5 L1085.7 235.1 L1086.1 235.7 L1086.5 236.3 L1086.9 237.0 L1087.2 237.6 L1087.6 238.2 L1088.0 238.8 L1088.4 239.4 L1088.7 239.9 L1089.1 240.5 L1089.5 241.1 L1089.9 241.6 L1090.2 242.2 L1090.6 242.7 L1091.0 243.3 L1091.4 243.8 L1091.7 244.3 L1092.1 244.8 L1092.5 245.3 L1092.9 245.7 L1093.2 246.2 L1093.6 246.7 L1094.0 247.1 L1094.4 247.6 L1094.7 248.0 L1095.1 248.4 L1095.5 248.8 L1095.9 249.2 L1096.2 249.6 L1096.6 250.0 L1097.0 250.3 L1097.4 250.7 L1097.7 251.0 L1098.1 251.4 L1098.5 251.7 L1098.9 252.0 L1099.2 252.4 L1099.6 252.7 L1100.0 253.0 L1100.4 253.2 L1100.7 253.5 L1101.1 253.8 L1101.5 254.0 L1101.9 254.3 L1102.2 254.5 L1102.6 254.8 L1103.0 255.0 L1103.4 255.2 L1103.7 255.4 L1104.1 255.6 L1104.5 255.8 L1104.9 256.0 L1105.2 256.2 L1105.6 256.4 L1106.0 256.5 L1106.4 256.7 L1106.7 256.8 L1107.1 257.0 L1107.5 257.1 L1107.9 257.2 L1108.2 257.4 L1108.6 257.5 L1109.0 257.6 L1109.4 257.7 L1109.7 257.7 L1110.1 257.8 L1110.5 257.9 L1110.9 258.0 L1111.2 258.0 L1111.6 258.1 L1112.0 258.1 L1112.4 258.1 L1112.7 258.2 L1113.1 258.2 L1113.5 258.2 L1113.9 258.2" fill="none" stroke="#0000ff" stroke-width="2.0" stroke-linejoin="round"/></g></g>
<text transform="translate(864.0 451.0) scale(0.81 1)" text-anchor="middle" font-size="12.8">0</text>
<text transform="translate(926.5 451.0) scale(0.81 1)" text-anchor="middle" font-size="12.8">5</text>
<text transform="translate(988.9 451.0) scale(0.81 1)" text-anchor="middle" font-size="12.8">10</text>
<text transform="translate(1051.3 451.0) scale(0.81 1)" text-anchor="middle" font-size="12.8">15</text>
<text transform="translate(1113.8 451.0) scale(0.81 1)" text-anchor="middle" font-size="12.8">20</text>
<text transform="translate(860.3 441.8) scale(0.81 1)" text-anchor="end" font-size="12.8">-0.5</text>
<text transform="translate(860.3 390.6) scale(0.81 1)" text-anchor="end" font-size="12.8">0</text>
<text transform="translate(860.3 339.5) scale(0.81 1)" text-anchor="end" font-size="12.8">0.5</text>
<text transform="translate(860.3 288.3) scale(0.81 1)" text-anchor="end" font-size="12.8">1</text>
<text transform="translate(860.3 237.1) scale(0.81 1)" text-anchor="end" font-size="12.8">1.5</text>
<text transform="translate(860.3 186.0) scale(0.81 1)" text-anchor="end" font-size="12.8">2</text>
<text transform="translate(860.3 134.8) scale(0.81 1)" text-anchor="end" font-size="12.8">2.5</text>
<text transform="translate(986.9 464.7) scale(0.905 1)" text-anchor="middle" word-spacing="1.2">t [s]</text>
<text transform="translate(832.1 284.0) rotate(-90) scale(0.955 1)" text-anchor="middle" font-size="11.3" word-spacing="1.4">Famo_LwSoll_f64 [°]</text>
</g>
<g>
<rect x="1192.7" y="130.5" width="249.8" height="307.0" fill="#fff"/>
<path d="M1255.2 437.5 V130.5 M1317.6 437.5 V130.5 M1380.0 437.5 V130.5" stroke="#242424" stroke-width="1" stroke-dasharray="2.4 2.6" fill="none" opacity="0.9"/>
<path d="M1192.7 386.3 H1442.5 M1192.7 335.2 H1442.5 M1192.7 284.0 H1442.5 M1192.7 232.8 H1442.5 M1192.7 181.7 H1442.5" stroke="#242424" stroke-width="0.95" stroke-dasharray="2.8 2.2" fill="none"/>
<path d="M1192.7 437.5 v-3 M1192.7 130.5 v3 M1255.2 437.5 v-3 M1255.2 130.5 v3 M1317.6 437.5 v-3 M1317.6 130.5 v3 M1380.0 437.5 v-3 M1380.0 130.5 v3 M1442.5 437.5 v-3 M1442.5 130.5 v3 M1192.7 437.5 h3 M1442.5 437.5 h-3 M1192.7 386.3 h3 M1442.5 386.3 h-3 M1192.7 335.2 h3 M1442.5 335.2 h-3 M1192.7 284.0 h3 M1442.5 284.0 h-3 M1192.7 232.8 h3 M1442.5 232.8 h-3 M1192.7 181.7 h3 M1442.5 181.7 h-3 M1192.7 130.5 h3 M1442.5 130.5 h-3" stroke="#464646" stroke-width="1" fill="none"/>
<rect x="1192.7" y="130.5" width="249.8" height="307.0" fill="none" stroke="#464646" stroke-width="1.45"/>
<g clip-path="url(#c4)"><g transform="translate(0 -0.35)"><path d="M1192.7 386.3 L1193.3 386.3 L1193.9 386.3 L1194.6 386.3 L1195.2 386.3 L1195.8 386.3 L1196.4 386.3 L1197.1 386.3 L1197.7 386.3 L1198.3 386.3 L1198.9 386.3 L1199.6 386.3 L1200.2 386.3 L1200.8 386.3 L1201.4 386.3 L1202.1 386.3 L1202.7 386.3 L1203.3 386.3 L1203.9 386.3 L1204.6 386.3 L1205.2 386.3 L1205.8 386.3 L1206.4 386.3 L1207.1 386.3 L1207.7 386.3 L1208.3 386.3 L1208.9 386.3 L1209.6 386.3 L1210.2 386.3 L1210.8 386.3 L1211.4 386.3 L1212.1 386.3 L1212.7 386.3 L1213.3 386.3 L1213.9 386.3 L1214.6 386.3 L1215.2 386.3 L1215.8 386.3 L1216.4 386.3 L1217.1 386.3 L1217.7 386.3 L1218.3 386.3 L1218.9 386.3 L1219.6 386.3 L1220.2 386.3 L1220.8 386.3 L1221.4 386.3 L1222.1 386.3 L1222.7 386.3 L1223.3 386.3 L1223.9 386.3 L1224.5 386.3 L1225.2 386.3 L1225.8 386.3 L1226.4 386.3 L1227.0 386.3 L1227.7 386.3 L1228.3 386.3 L1228.9 386.3 L1229.5 386.3 L1230.2 386.3 L1230.8 386.3 L1231.4 386.3 L1232.0 386.3 L1232.7 386.3 L1233.3 386.3 L1233.9 386.3 L1234.5 386.3 L1235.2 386.3 L1235.8 386.3 L1236.4 386.3 L1237.0 386.3 L1237.7 386.3 L1238.3 386.3 L1238.9 386.3 L1239.5 386.3 L1240.2 386.3 L1240.8 386.3 L1241.4 386.3 L1242.0 386.3 L1242.7 386.3 L1243.3 386.3 L1243.9 386.3 L1244.5 386.3 L1245.2 386.3 L1245.8 386.3 L1246.4 386.3 L1247.0 386.3 L1247.7 386.3 L1248.3 386.3 L1248.9 386.3 L1249.5 386.3 L1250.2 386.3 L1250.8 386.3 L1251.4 386.3 L1252.0 386.3 L1252.7 386.3 L1253.3 386.3 L1253.9 386.3 L1254.5 386.3 L1255.2 386.3 L1255.8 386.3 L1256.4 386.3 L1257.0 386.3 L1257.6 386.3 L1258.3 386.3 L1258.9 386.3 L1259.5 386.3 L1260.1 386.3 L1260.8 386.3 L1261.4 386.3 L1262.0 386.3 L1262.6 386.3 L1263.3 386.3 L1263.9 386.3 L1264.5 386.3 L1265.1 386.3 L1265.8 386.3 L1266.4 386.3 L1267.0 386.3 L1267.6 386.3 L1268.3 386.3 L1268.9 386.3 L1269.5 386.3 L1270.1 386.3 L1270.8 386.3 L1271.4 386.3 L1272.0 386.3 L1272.6 386.3 L1273.3 386.3 L1273.9 386.3 L1274.5 386.3 L1275.1 386.3 L1275.8 386.3 L1276.4 386.3 L1277.0 386.3 L1277.6 386.3 L1278.3 386.3 L1278.9 386.3 L1279.5 386.3 L1280.1 386.3 L1280.8 386.3 L1281.4 386.3 L1282.0 386.3 L1282.6 386.3 L1283.3 386.2 L1283.9 386.2 L1284.5 386.2 L1285.1 386.1 L1285.8 386.1 L1286.4 386.0 L1287.0 386.0 L1287.6 385.9 L1288.2 385.8 L1288.9 385.7 L1289.5 385.6 L1290.1 385.5 L1290.7 385.4 L1291.4 385.3 L1292.0 385.2 L1292.6 385.0 L1293.2 384.9 L1293.9 384.7 L1294.5 384.5 L1295.1 384.3 L1295.7 384.1 L1296.4 383.9 L1297.0 383.6 L1297.6 383.4 L1298.2 383.1 L1298.9 382.8 L1299.5 382.5 L1300.1 382.2 L1300.7 381.8 L1301.4 381.5 L1302.0 381.1 L1302.6 380.7 L1303.2 380.3 L1303.9 379.9 L1304.5 379.4 L1305.1 378.9 L1305.7 378.5 L1306.4 378.0 L1307.0 377.4 L1307.6 376.9 L1308.2 376.3 L1308.9 375.8 L1309.5 375.2 L1310.1 374.5 L1310.7 373.9 L1311.4 373.3 L1312.0 372.6 L1312.6 371.9 L1313.2 371.2 L1313.9 370.5 L1314.5 369.7 L1315.1 368.9 L1315.7 368.2 L1316.4 367.4 L1317.0 366.5 L1317.6 365.8 L1318.2 365.1 L1318.8 364.3 L1319.5 363.6 L1320.1 362.8 L1320.7 362.0 L1321.3 361.1 L1322.0 360.3 L1322.6 359.5 L1323.2 358.6 L1323.8 357.7 L1324.5 356.8 L1325.1 355.9 L1325.7 355.0 L1326.3 354.0 L1327.0 353.0 L1327.6 352.1 L1328.2 351.1 L1328.8 350.1 L1329.5 349.1 L1330.1 348.0 L1330.7 347.0 L1331.3 345.9 L1332.0 344.8 L1332.6 343.7 L1333.2 342.6 L1333.8 341.5 L1334.5 340.4 L1335.1 339.2 L1335.7 338.1 L1336.3 336.9 L1337.0 335.7 L1337.6 334.6 L1338.2 333.4 L1338.8 332.2 L1339.5 331.0 L1340.1 329.7 L1340.7 328.5 L1341.3 327.3 L1342.0 326.0 L1342.6 324.8 L1343.2 323.5 L1343.8 322.2 L1344.5 321.0 L1345.1 319.7 L1345.7 318.4 L1346.3 317.1 L1347.0 315.8 L1347.6 314.5 L1348.2 313.1 L1348.8 311.8 L1349.4 310.5 L1350.1 309.1 L1350.7 307.8 L1351.3 306.4 L1351.9 305.1 L1352.6 303.7 L1353.2 302.4 L1353.8 301.0 L1354.4 299.6 L1355.1 298.2 L1355.7 296.9 L1356.3 295.5 L1356.9 294.1 L1357.6 292.7 L1358.2 291.3 L1358.8 289.9 L1359.4 288.5 L1360.1 287.1 L1360.7 285.7 L1361.3 284.3 L1361.9 282.9 L1362.6 281.5 L1363.2 280.2 L1363.8 278.8 L1364.4 277.4 L1365.1 276.0 L1365.7 274.6 L1366.3 273.2 L1366.9 271.8 L1367.6 270.4 L1368.2 269.0 L1368.8 267.7 L1369.4 266.3 L1370.1 264.9 L1370.7 263.5 L1371.3 262.2 L1371.9 260.8 L1372.6 259.4 L1373.2 258.1 L1373.8 256.7 L1374.4 255.4 L1375.1 254.1 L1375.7 252.7 L1376.3 251.4 L1376.9 250.1 L1377.6 248.7 L1378.2 247.4 L1378.8 246.1 L1379.4 244.8 L1380.0 243.5 L1380.7 242.2 L1381.3 240.9 L1381.9 239.6 L1382.5 238.3 L1383.2 237.1 L1383.8 235.8 L1384.4 234.5 L1385.0 233.3 L1385.7 232.0 L1386.3 230.8 L1386.9 229.6 L1387.5 228.3 L1388.2 227.1 L1388.8 225.9 L1389.4 224.7 L1390.0 223.5 L1390.7 222.3 L1391.3 221.1 L1391.9 220.0 L1392.5 218.8 L1393.2 217.6 L1393.8 216.5 L1394.4 215.3 L1395.0 214.2 L1395.7 213.0 L1396.3 211.9 L1396.9 210.8 L1397.5 209.7 L1398.2 208.6 L1398.8 207.5 L1399.4 206.4 L1400.0 205.3 L1400.7 204.2 L1401.3 203.1 L1401.9 202.1 L1402.5 201.0 L1403.2 199.9 L1403.8 198.9 L1404.4 197.9 L1405.0 196.8 L1405.7 195.8 L1406.3 194.8 L1406.9 193.8 L1407.5 192.8 L1408.2 191.8 L1408.8 190.8 L1409.4 189.8 L1410.0 188.9 L1410.7 187.9 L1411.3 186.9 L1411.9 186.0 L1412.5 185.0 L1413.1 184.1 L1413.8 183.1 L1414.4 182.2 L1415.0 181.3 L1415.6 180.4 L1416.3 179.5 L1416.9 178.6 L1417.5 177.7 L1418.1 176.8 L1418.8 175.9 L1419.4 175.0 L1420.0 174.1 L1420.6 173.3 L1421.3 172.4 L1421.9 171.6 L1422.5 170.7 L1423.1 169.8 L1423.8 169.0 L1424.4 168.2 L1425.0 167.3 L1425.6 166.5 L1426.3 165.7 L1426.9 164.8 L1427.5 164.0 L1428.1 163.2 L1428.8 162.4 L1429.4 161.5 L1430.0 160.7 L1430.6 159.9 L1431.3 159.1 L1431.9 158.3 L1432.5 157.5 L1433.1 156.7 L1433.8 155.9 L1434.4 155.1 L1435.0 154.3 L1435.6 153.5 L1436.3 152.7 L1436.9 151.9 L1437.5 151.1 L1438.1 150.3 L1438.8 149.6 L1439.4 148.8 L1440.0 148.0 L1440.6 147.2 L1441.3 146.4 L1441.9 145.6 L1442.5 144.8" fill="none" stroke="#0000ff" stroke-width="2.0" stroke-linejoin="round"/></g></g>
<text transform="translate(1192.4 451.0) scale(0.81 1)" text-anchor="middle" font-size="12.8">0</text>
<text transform="translate(1254.9 451.0) scale(0.81 1)" text-anchor="middle" font-size="12.8">5</text>
<text transform="translate(1317.3 451.0) scale(0.81 1)" text-anchor="middle" font-size="12.8">10</text>
<text transform="translate(1379.8 451.0) scale(0.81 1)" text-anchor="middle" font-size="12.8">15</text>
<text transform="translate(1442.2 451.0) scale(0.81 1)" text-anchor="middle" font-size="12.8">20</text>
<text transform="translate(1188.7 441.8) scale(0.81 1)" text-anchor="end" font-size="12.8">-10</text>
<text transform="translate(1188.7 390.6) scale(0.81 1)" text-anchor="end" font-size="12.8">0</text>
<text transform="translate(1188.7 339.5) scale(0.81 1)" text-anchor="end" font-size="12.8">10</text>
<text transform="translate(1188.7 288.3) scale(0.81 1)" text-anchor="end" font-size="12.8">20</text>
<text transform="translate(1188.7 237.1) scale(0.81 1)" text-anchor="end" font-size="12.8">30</text>
<text transform="translate(1188.7 186.0) scale(0.81 1)" text-anchor="end" font-size="12.8">40</text>
<text transform="translate(1188.7 134.8) scale(0.81 1)" text-anchor="end" font-size="12.8">50</text>
<text transform="translate(1315.3 464.7) scale(0.905 1)" text-anchor="middle" word-spacing="1.2">t [s]</text>
<text transform="translate(1164.6 284.0) rotate(-90) scale(0.955 1)" text-anchor="middle" font-size="11.3" word-spacing="1.4">SenGier_psi_unfilt_K_f64 [°/s]</text>
</g>
<g>
<rect x="207.6" y="556.9" width="249.8" height="307.1" fill="#fff"/>
<path d="M270.1 864.0 V556.9 M332.5 864.0 V556.9 M394.9 864.0 V556.9" stroke="#242424" stroke-width="1" stroke-dasharray="2.4 2.6" fill="none" opacity="0.9"/>
<path d="M207.6 820.1 H457.4 M207.6 776.3 H457.4 M207.6 732.4 H457.4 M207.6 688.5 H457.4 M207.6 644.6 H457.4 M207.6 600.8 H457.4" stroke="#242424" stroke-width="0.95" stroke-dasharray="2.8 2.2" fill="none"/>
<path d="M207.6 864.0 v-3 M207.6 556.9 v3 M270.1 864.0 v-3 M270.1 556.9 v3 M332.5 864.0 v-3 M332.5 556.9 v3 M394.9 864.0 v-3 M394.9 556.9 v3 M457.4 864.0 v-3 M457.4 556.9 v3 M207.6 864.0 h3 M457.4 864.0 h-3 M207.6 820.1 h3 M457.4 820.1 h-3 M207.6 776.3 h3 M457.4 776.3 h-3 M207.6 732.4 h3 M457.4 732.4 h-3 M207.6 688.5 h3 M457.4 688.5 h-3 M207.6 644.6 h3 M457.4 644.6 h-3 M207.6 600.8 h3 M457.4 600.8 h-3 M207.6 556.9 h3 M457.4 556.9 h-3" stroke="#464646" stroke-width="1" fill="none"/>
<rect x="207.6" y="556.9" width="249.8" height="307.1" fill="none" stroke="#464646" stroke-width="1.45"/>
<g clip-path="url(#c5)"><g transform="translate(0 -0.35)"><path d="M207.6 819.9 L208.0 819.9 L208.3 819.9 L208.7 819.9 L209.1 819.9 L209.5 819.9 L209.8 819.9 L210.2 819.9 L210.6 819.9 L211.0 819.9 L211.3 819.9 L211.7 819.9 L212.1 819.9 L212.5 819.9 L212.8 819.9 L213.2 819.9 L213.6 819.9 L214.0 819.9 L214.3 819.9 L214.7 819.9 L215.1 819.9 L215.5 819.9 L215.8 819.9 L216.2 819.9 L216.6 819.9 L217.0 819.9 L217.3 819.9 L217.7 819.9 L218.1 819.9 L218.5 819.9 L218.8 819.9 L219.2 819.9 L219.6 819.9 L220.0 819.9 L220.3 819.9 L220.7 819.9 L221.1 819.9 L221.5 819.9 L221.8 819.9 L222.2 819.9 L222.6 819.9 L223.0 819.9 L223.3 819.9 L223.7 819.9 L224.1 819.9 L224.5 819.9 L224.8 819.9 L225.2 819.9 L225.6 819.9 L226.0 819.9 L226.3 819.9 L226.7 819.9 L227.1 819.9 L227.5 819.9 L227.8 819.9 L228.2 819.9 L228.6 819.9 L229.0 819.9 L229.3 819.9 L229.7 819.9 L230.1 819.9 L230.5 819.9 L230.8 819.9 L231.2 819.9 L231.6 819.9 L232.0 819.9 L232.3 819.9 L232.7 819.9 L233.1 819.9 L233.5 819.9 L233.8 819.9 L234.2 819.9 L234.6 819.9 L235.0 819.9 L235.3 819.9 L235.7 819.9 L236.1 819.9 L236.5 819.9 L236.8 819.9 L237.2 819.9 L237.6 819.9 L238.0 819.9 L238.3 819.9 L238.7 819.9 L239.1 819.9 L239.4 819.9 L239.8 819.9 L240.2 819.9 L240.6 819.9 L240.9 819.9 L241.3 819.9 L241.7 819.9 L242.1 819.9 L242.4 819.9 L242.8 819.9 L243.2 819.9 L243.6 819.9 L243.9 819.9 L244.3 819.9 L244.7 819.9 L245.1 819.9 L245.4 819.9 L245.8 819.9 L246.2 819.9 L246.6 819.9 L246.9 819.9 L247.3 819.9 L247.7 819.9 L248.1 819.9 L248.4 819.9 L248.8 819.9 L249.2 819.9 L249.6 819.9 L249.9 819.9 L250.3 819.9 L250.7 819.9 L251.1 819.9 L251.4 819.9 L251.8 819.9 L252.2 819.9 L252.6 819.9 L252.9 819.9 L253.3 819.9 L253.7 819.9 L254.1 819.9 L254.4 819.9 L254.8 819.9 L255.2 819.9 L255.6 819.9 L255.9 819.9 L256.3 819.9 L256.7 819.9 L257.1 819.9 L257.4 819.9 L257.8 819.9 L258.2 819.9 L258.6 819.9 L258.9 819.9 L259.3 819.9 L259.7 819.9 L260.1 819.9 L260.4 819.9 L260.8 819.9 L261.2 819.9 L261.6 819.9 L261.9 819.9 L262.3 819.9 L262.7 819.9 L263.1 819.9 L263.4 819.9 L263.8 819.9 L264.2 819.9 L264.6 819.9 L264.9 819.9 L265.3 819.9 L265.7 819.9 L266.1 819.9 L266.4 819.9 L266.8 819.9 L267.2 819.9 L267.6 819.9 L267.9 819.9 L268.3 819.9 L268.7 819.9 L269.1 819.9 L269.4 819.9 L269.8 819.9 L270.2 819.9 L270.5 819.9 L270.9 819.9 L271.3 819.9 L271.7 819.9 L272.0 819.9 L272.4 819.9 L272.8 819.9 L273.2 819.9 L273.5 819.9 L273.9 819.9 L274.3 819.9 L274.7 819.9 L275.0 819.9 L275.4 819.9 L275.8 819.9 L276.2 819.9 L276.5 819.9 L276.9 819.9 L277.3 819.9 L277.7 819.9 L278.0 819.9 L278.4 819.9 L278.8 819.9 L279.2 819.9 L279.5 819.9 L279.9 820.5 L280.3 821.0 L280.7 821.0 L281.0 821.0 L281.4 821.0 L281.8 821.0 L282.2 821.0 L282.5 821.0 L282.9 821.0 L283.3 821.0 L283.7 821.0 L284.0 821.0 L284.4 821.0 L284.8 821.0 L285.2 821.0 L285.5 821.0 L285.9 821.0 L286.3 821.0 L286.7 821.0 L287.0 821.0 L287.4 821.0 L287.8 821.0 L288.2 821.0 L288.5 821.0 L288.9 821.0 L289.3 821.0 L289.7 821.0 L290.0 821.0 L290.4 821.0 L290.8 820.9 L291.2 820.8 L291.5 820.7 L291.9 820.6 L292.3 820.5 L292.7 820.3 L293.0 820.2 L293.4 820.0 L293.8 819.9 L294.2 819.7 L294.5 819.4 L294.9 819.2 L295.3 818.9 L295.7 818.6 L296.0 818.2 L296.4 817.7 L296.8 817.3 L297.2 816.8 L297.5 816.3 L297.9 815.8 L298.3 815.3 L298.7 814.8 L299.0 814.3 L299.4 813.8 L299.8 813.3 L300.2 812.7 L300.5 812.1 L300.9 811.5 L301.3 810.8 L301.6 810.1 L302.0 809.4 L302.4 808.6 L302.8 807.8 L303.1 806.9 L303.5 806.0 L303.9 805.1 L304.3 804.1 L304.6 803.1 L305.0 802.1 L305.4 801.0 L305.8 799.9 L306.1 798.7 L306.5 797.6 L306.9 796.4 L307.3 795.2 L307.6 793.9 L308.0 792.7 L308.4 791.4 L308.8 790.1 L309.1 788.7 L309.5 787.4 L309.9 786.0 L310.3 784.6 L310.6 783.1 L311.0 781.7 L311.4 780.2 L311.8 778.6 L312.1 777.1 L312.5 775.5 L312.9 773.8 L313.3 772.2 L313.6 770.5 L314.0 768.8 L314.4 767.1 L314.8 765.3 L315.1 763.6 L315.5 761.8 L315.9 760.0 L316.3 758.2 L316.6 756.4 L317.0 754.5 L317.4 752.7 L317.8 750.8 L318.1 748.9 L318.5 747.0 L318.9 745.1 L319.3 743.2 L319.6 741.3 L320.0 739.4 L320.4 737.5 L320.8 735.6 L321.1 733.7 L321.5 731.8 L321.9 729.9 L322.3 728.0 L322.6 726.1 L323.0 724.2 L323.4 722.3 L323.8 720.3 L324.1 718.4 L324.5 716.5 L324.9 714.6 L325.3 712.6 L325.6 710.7 L326.0 708.7 L326.4 706.7 L326.8 704.7 L327.1 702.8 L327.5 700.8 L327.9 698.8 L328.3 696.8 L328.6 694.8 L329.0 692.8 L329.4 690.8 L329.8 688.8 L330.1 686.8 L330.5 684.9 L331.3 687.4 L332.1 699.2 L333.1 694.0 L334.6 687.2 L335.0 685.5 L335.4 683.9 L335.7 682.2 L336.1 680.6 L336.5 678.9 L336.9 677.3 L337.2 675.7 L337.6 674.1 L338.0 672.5 L338.4 670.9 L338.7 669.4 L339.1 667.8 L339.5 666.2 L339.9 664.6 L340.2 663.1 L340.6 661.5 L341.0 660.0 L341.4 658.4 L341.7 656.9 L342.1 655.3 L342.5 653.8 L342.9 652.2 L343.2 650.7 L343.6 649.1 L344.0 647.6 L344.4 646.0 L344.7 644.4 L345.1 642.9 L345.5 641.3 L345.9 639.8 L346.2 638.2 L346.6 636.7 L347.0 635.2 L347.4 633.7 L347.7 632.2 L348.1 630.7 L348.5 629.3 L348.9 627.9 L349.2 626.5 L349.6 625.1 L350.0 623.8 L350.4 622.5 L350.7 621.2 L351.1 620.0 L351.5 618.7 L351.9 617.6 L352.2 616.4 L352.6 615.3 L353.0 614.2 L353.4 613.2 L353.7 612.1 L354.1 611.1 L354.5 610.1 L354.9 609.1 L355.2 608.2 L355.6 607.3 L356.0 606.3 L356.4 605.4 L356.7 604.5 L357.1 603.6 L357.5 602.7 L357.9 601.8 L358.2 601.0 L358.6 600.1 L359.0 599.2 L359.4 598.4 L359.7 597.5 L360.1 596.7 L360.5 595.8 L360.9 595.0 L361.2 594.2 L361.6 593.4 L362.0 592.6 L362.4 591.8 L362.7 591.0 L363.1 590.3 L363.5 589.6 L363.8 588.9 L364.2 588.2 L364.6 587.5 L365.0 586.8 L365.3 586.2 L365.7 585.6 L366.1 585.0 L366.5 584.4 L366.8 583.9 L367.2 583.3 L367.6 582.8 L368.0 582.3 L368.3 581.9 L368.7 581.4 L369.1 581.0 L369.5 580.6 L369.8 580.2 L370.2 579.9 L370.6 579.6 L371.0 579.3 L371.3 579.0 L371.7 578.7 L372.1 578.5 L372.5 578.2 L372.8 578.0 L373.2 577.8 L373.6 577.6 L374.0 577.5 L374.3 577.3 L374.7 577.2 L375.1 577.1 L375.5 577.0 L375.8 576.9 L376.2 576.9 L376.6 576.8 L377.0 576.8 L377.3 576.8 L377.7 576.9 L378.1 576.9 L378.5 577.0 L378.8 577.1 L379.2 577.2 L379.6 577.3 L380.0 577.5 L380.3 577.6 L380.7 577.8 L381.1 578.0 L381.5 578.2 L381.8 578.4 L382.2 578.6 L382.6 578.9 L383.0 579.1 L383.3 579.4 L383.7 579.7 L384.1 579.9 L384.5 580.2 L384.8 580.6 L385.2 580.9 L385.6 581.2 L386.0 581.6 L386.3 581.9 L386.7 582.3 L387.1 582.7 L387.5 583.1 L387.8 583.5 L388.2 583.9 L388.6 584.4 L389.0 584.8 L389.3 585.3 L389.7 585.8 L390.1 586.2 L390.5 586.7 L390.8 587.2 L391.2 587.7 L391.6 588.2 L392.0 588.8 L392.3 589.3 L392.7 589.8 L393.1 590.4 L393.5 590.9 L393.8 591.5 L394.2 592.1 L394.6 592.7 L394.9 593.3 L395.3 593.9 L395.7 594.5 L396.1 595.1 L396.4 595.7 L396.8 596.3 L397.2 597.0 L397.6 597.6 L397.9 598.2 L398.3 598.9 L398.7 599.6 L399.1 600.2 L399.4 600.9 L399.8 601.6 L400.2 602.2 L400.6 602.9 L400.9 603.6 L401.3 604.3 L401.7 605.0 L402.1 605.7 L402.4 606.4 L402.8 607.1 L403.2 607.8 L403.6 608.5 L403.9 609.2 L404.3 609.9 L404.7 610.6 L405.1 611.4 L405.4 612.1 L405.8 612.8 L406.2 613.5 L406.6 614.3 L406.9 615.0 L407.3 615.7 L407.7 616.4 L408.1 617.2 L408.4 617.9 L408.8 618.6 L409.2 619.4 L409.6 620.1 L409.9 620.9 L410.3 621.6 L410.7 622.3 L411.1 623.1 L411.4 623.8 L411.8 624.5 L412.2 625.3 L412.6 626.0 L412.9 626.8 L413.3 627.5 L413.7 628.2 L414.1 629.0 L414.4 629.7 L414.8 630.5 L415.2 631.2 L415.6 632.0 L415.9 632.7 L416.3 633.4 L416.7 634.2 L417.1 634.9 L417.4 635.7 L417.8 636.4 L418.2 637.2 L418.6 637.9 L418.9 638.6 L419.3 639.4 L419.7 640.1 L420.1 640.9 L420.4 641.6 L420.8 642.3 L421.2 643.1 L421.6 643.8 L421.9 644.5 L422.3 645.3 L422.7 646.0 L423.1 646.7 L423.4 647.5 L423.8 648.2 L424.2 648.9 L424.6 649.6 L424.9 650.4 L425.3 651.1 L425.7 651.8 L426.1 652.5 L426.4 653.2 L426.8 653.9 L427.2 654.6 L427.5 655.3 L427.9 656.0 L428.3 656.7 L428.7 657.3 L429.0 658.0 L429.4 658.7 L429.8 659.4 L430.2 660.0 L430.5 660.7 L430.9 661.3 L431.3 662.0 L431.7 662.6 L432.0 663.2 L432.4 663.8 L432.8 664.5 L433.2 665.1 L433.5 665.6 L433.9 666.2 L434.3 666.8 L434.7 667.3 L435.0 667.9 L435.4 668.4 L435.8 668.9 L436.2 669.5 L436.5 670.0 L436.9 670.4 L437.3 670.9 L437.7 671.4 L438.0 671.8 L438.4 672.3 L438.8 672.7 L439.2 673.2 L439.5 673.6 L439.9 674.0 L440.3 674.4 L440.7 674.8 L441.0 675.1 L441.4 675.5 L441.8 675.9 L442.2 676.2 L442.5 676.5 L442.9 676.9 L443.3 677.2 L443.7 677.5 L444.0 677.8 L444.4 678.1 L444.8 678.3 L445.2 678.6 L445.5 678.9 L445.9 679.1 L446.3 679.4 L446.7 679.6 L447.0 679.8 L447.4 680.0 L447.8 680.3 L448.2 680.5 L448.5 680.7 L448.9 680.8 L449.3 681.0 L449.7 681.2 L450.0 681.3 L450.4 681.5 L450.8 681.6 L451.2 681.8 L451.5 681.9 L451.9 682.0 L452.3 682.1 L452.7 682.2 L453.0 682.3 L453.4 682.4 L453.8 682.5 L454.2 682.5 L454.5 682.6 L454.9 682.6 L455.3 682.7 L455.7 682.7 L456.0 682.8 L456.4 682.8 L456.8 682.8 L457.2 682.8" fill="none" stroke="#0000ff" stroke-width="2.0" stroke-linejoin="round"/></g></g>
<text transform="translate(207.3 877.5) scale(0.81 1)" text-anchor="middle" font-size="12.8">0</text>
<text transform="translate(269.8 877.5) scale(0.81 1)" text-anchor="middle" font-size="12.8">5</text>
<text transform="translate(332.2 877.5) scale(0.81 1)" text-anchor="middle" font-size="12.8">10</text>
<text transform="translate(394.6 877.5) scale(0.81 1)" text-anchor="middle" font-size="12.8">15</text>
<text transform="translate(457.1 877.5) scale(0.81 1)" text-anchor="middle" font-size="12.8">20</text>
<text transform="translate(203.6 868.3) scale(0.81 1)" text-anchor="end" font-size="12.8">-1</text>
<text transform="translate(203.6 824.4) scale(0.81 1)" text-anchor="end" font-size="12.8">0</text>
<text transform="translate(203.6 780.6) scale(0.81 1)" text-anchor="end" font-size="12.8">1</text>
<text transform="translate(203.6 736.7) scale(0.81 1)" text-anchor="end" font-size="12.8">2</text>
<text transform="translate(203.6 692.8) scale(0.81 1)" text-anchor="end" font-size="12.8">3</text>
<text transform="translate(203.6 648.9) scale(0.81 1)" text-anchor="end" font-size="12.8">4</text>
<text transform="translate(203.6 605.1) scale(0.81 1)" text-anchor="end" font-size="12.8">5</text>
<text transform="translate(203.6 561.2) scale(0.81 1)" text-anchor="end" font-size="12.8">6</text>
<text transform="translate(330.2 891.2) scale(0.905 1)" text-anchor="middle" word-spacing="1.2">t [s]</text>
<text transform="translate(185.9 710.5) rotate(-90) scale(0.955 1)" text-anchor="middle" font-size="11.3" word-spacing="1.4">SenGier_psip_roh_K_f64 [°/s]</text>
</g>
<g>
<rect x="535.5" y="556.9" width="249.8" height="307.1" fill="#fff"/>
<path d="M598.0 864.0 V556.9 M660.4 864.0 V556.9 M722.8 864.0 V556.9" stroke="#242424" stroke-width="1" stroke-dasharray="2.4 2.6" fill="none" opacity="0.9"/>
<path d="M535.5 833.3 H785.3 M535.5 802.6 H785.3 M535.5 771.9 H785.3 M535.5 741.2 H785.3 M535.5 710.5 H785.3 M535.5 679.7 H785.3 M535.5 649.0 H785.3 M535.5 618.3 H785.3 M535.5 587.6 H785.3" stroke="#242424" stroke-width="0.95" stroke-dasharray="2.8 2.2" fill="none"/>
<path d="M535.5 864.0 v-3 M535.5 556.9 v3 M598.0 864.0 v-3 M598.0 556.9 v3 M660.4 864.0 v-3 M660.4 556.9 v3 M722.8 864.0 v-3 M722.8 556.9 v3 M785.3 864.0 v-3 M785.3 556.9 v3 M535.5 864.0 h3 M785.3 864.0 h-3 M535.5 833.3 h3 M785.3 833.3 h-3 M535.5 802.6 h3 M785.3 802.6 h-3 M535.5 771.9 h3 M785.3 771.9 h-3 M535.5 741.2 h3 M785.3 741.2 h-3 M535.5 710.5 h3 M785.3 710.5 h-3 M535.5 679.7 h3 M785.3 679.7 h-3 M535.5 649.0 h3 M785.3 649.0 h-3 M535.5 618.3 h3 M785.3 618.3 h-3 M535.5 587.6 h3 M785.3 587.6 h-3 M535.5 556.9 h3 M785.3 556.9 h-3" stroke="#464646" stroke-width="1" fill="none"/>
<rect x="535.5" y="556.9" width="249.8" height="307.1" fill="none" stroke="#464646" stroke-width="1.45"/>
<g clip-path="url(#c6)"><g transform="translate(0 -0.35)"><path d="M535.5 833.1 L535.9 833.1 L536.2 833.1 L536.6 833.1 L537.0 833.1 L537.4 833.1 L537.7 833.1 L538.1 833.1 L538.5 833.1 L538.9 833.1 L539.2 833.1 L539.6 833.1 L540.0 833.1 L540.4 833.1 L540.7 833.1 L541.1 833.1 L541.5 833.1 L541.9 833.1 L542.2 833.1 L542.6 833.1 L543.0 833.1 L543.4 833.1 L543.7 833.1 L544.1 833.1 L544.5 833.1 L544.9 833.1 L545.2 833.1 L545.6 833.1 L546.0 833.1 L546.4 833.1 L546.7 833.1 L547.1 833.1 L547.5 833.1 L547.9 833.1 L548.2 833.1 L548.6 833.1 L549.0 833.1 L549.4 833.1 L549.7 833.1 L550.1 833.1 L550.5 833.1 L550.9 833.1 L551.2 833.1 L551.6 833.1 L552.0 833.1 L552.4 833.1 L552.7 833.1 L553.1 833.1 L553.5 833.1 L553.9 833.1 L554.2 833.1 L554.6 833.1 L555.0 833.1 L555.4 833.1 L555.7 833.1 L556.1 833.1 L556.5 833.1 L556.9 833.1 L557.2 833.1 L557.6 833.1 L558.0 833.1 L558.4 833.1 L558.7 833.1 L559.1 833.1 L559.5 833.1 L559.9 833.1 L560.2 833.1 L560.6 833.1 L561.0 833.1 L561.4 833.1 L561.7 833.1 L562.1 833.1 L562.5 833.1 L562.9 833.1 L563.2 833.1 L563.6 833.1 L564.0 833.1 L564.4 833.1 L564.7 833.1 L565.1 833.1 L565.5 833.1 L565.9 833.1 L566.2 833.1 L566.6 833.1 L567.0 833.1 L567.3 833.1 L567.7 833.1 L568.1 833.1 L568.5 833.1 L568.8 833.1 L569.2 833.1 L569.6 833.1 L570.0 833.1 L570.3 833.1 L570.7 833.1 L571.1 833.1 L571.5 833.1 L571.8 833.1 L572.2 833.1 L572.6 833.1 L573.0 833.1 L573.3 833.1 L573.7 833.1 L574.1 833.1 L574.5 833.1 L574.8 833.1 L575.2 833.1 L575.6 833.1 L576.0 833.1 L576.3 833.1 L576.7 833.1 L577.1 833.1 L577.5 833.1 L577.8 833.1 L578.2 833.1 L578.6 833.1 L579.0 833.1 L579.3 833.1 L579.7 833.1 L580.1 833.1 L580.5 833.1 L580.8 833.1 L581.2 833.1 L581.6 833.1 L582.0 833.1 L582.3 833.1 L582.7 833.1 L583.1 833.1 L583.5 833.1 L583.8 833.1 L584.2 833.1 L584.6 833.1 L585.0 833.1 L585.3 833.1 L585.7 833.1 L586.1 833.1 L586.5 833.1 L586.8 833.1 L587.2 833.1 L587.6 833.1 L588.0 833.1 L588.3 833.1 L588.7 833.1 L589.1 833.1 L589.5 833.1 L589.8 833.1 L590.2 833.1 L590.6 833.1 L591.0 833.1 L591.3 833.1 L591.7 833.1 L592.1 833.1 L592.5 833.1 L592.8 833.1 L593.2 833.1 L593.6 833.1 L594.0 833.1 L594.3 833.1 L594.7 833.1 L595.1 833.1 L595.5 833.1 L595.8 833.1 L596.2 833.1 L596.6 833.1 L597.0 833.1 L597.3 833.1 L597.7 833.1 L598.1 833.1 L598.4 833.1 L598.8 833.1 L599.2 833.1 L599.6 833.1 L599.9 833.1 L600.3 833.1 L600.7 833.1 L601.1 833.1 L601.4 833.1 L601.8 833.1 L602.2 833.1 L602.6 833.1 L602.9 833.1 L603.3 833.1 L603.7 833.1 L604.1 833.1 L604.4 833.1 L604.8 833.1 L605.2 833.1 L605.6 833.1 L605.9 833.1 L606.3 833.1 L606.7 833.1 L607.1 833.1 L607.4 833.1 L607.8 833.6 L608.2 834.2 L608.6 834.2 L608.9 834.2 L609.3 834.2 L609.7 834.2 L610.1 834.2 L610.4 834.2 L610.8 834.2 L611.2 834.2 L611.6 834.2 L611.9 834.2 L612.3 834.2 L612.7 834.2 L613.1 834.2 L613.4 834.2 L613.8 834.2 L614.2 834.2 L614.6 834.2 L614.9 834.2 L615.3 834.2 L615.7 834.2 L616.1 834.2 L616.4 834.2 L616.8 834.2 L617.2 834.2 L617.6 834.2 L617.9 834.2 L618.3 834.2 L618.7 834.1 L619.1 834.0 L619.4 833.9 L619.8 833.8 L620.2 833.6 L620.6 833.5 L620.9 833.3 L621.3 833.2 L621.7 833.0 L622.1 832.8 L622.4 832.6 L622.8 832.3 L623.2 832.0 L623.6 831.7 L623.9 831.3 L624.3 830.8 L624.7 830.3 L625.1 829.8 L625.4 829.3 L625.8 828.8 L626.2 828.3 L626.6 827.8 L626.9 827.3 L627.3 826.8 L627.7 826.2 L628.1 825.6 L628.4 825.0 L628.8 824.3 L629.2 823.7 L629.5 822.9 L629.9 822.2 L630.3 821.4 L630.7 820.5 L631.0 819.6 L631.4 818.7 L631.8 817.8 L632.2 816.7 L632.5 815.7 L632.9 814.6 L633.3 813.5 L633.7 812.4 L634.0 811.2 L634.4 810.0 L634.8 808.7 L635.2 807.5 L635.5 806.2 L635.9 804.9 L636.3 803.6 L636.7 802.2 L637.0 800.9 L637.4 799.5 L637.8 798.0 L638.2 796.6 L638.5 795.1 L638.9 793.5 L639.3 792.0 L639.7 790.4 L640.0 788.8 L640.4 787.1 L640.8 785.5 L641.2 783.8 L641.5 782.0 L641.9 780.3 L642.3 778.5 L642.7 776.7 L643.0 774.9 L643.4 773.0 L643.8 771.2 L644.2 769.3 L644.5 767.4 L644.9 765.5 L645.3 763.6 L645.7 761.6 L646.0 759.7 L646.4 757.8 L646.8 755.8 L647.2 753.8 L647.5 751.9 L647.9 749.9 L648.3 747.9 L648.7 746.0 L649.0 744.0 L649.4 742.0 L649.8 740.1 L650.2 738.1 L650.5 736.1 L650.9 734.1 L651.3 732.2 L651.7 730.2 L652.0 728.2 L652.4 726.2 L652.8 724.2 L653.2 722.2 L653.5 720.2 L653.9 718.2 L654.3 716.1 L654.7 714.1 L655.0 712.0 L655.4 710.0 L655.8 707.9 L656.2 705.8 L656.5 703.8 L656.9 701.7 L657.3 699.6 L657.7 697.6 L658.0 695.5 L658.4 693.6 L659.2 696.2 L660.0 708.3 L661.0 703.0 L662.5 695.9 L662.9 694.2 L663.3 692.5 L663.6 690.8 L664.0 689.1 L664.4 687.4 L664.8 685.7 L665.1 684.1 L665.5 682.4 L665.9 680.8 L666.3 679.2 L666.6 677.5 L667.0 675.9 L667.4 674.3 L667.8 672.6 L668.1 671.0 L668.5 669.4 L668.9 667.8 L669.3 666.2 L669.6 664.6 L670.0 663.0 L670.4 661.4 L670.8 659.8 L671.1 658.2 L671.5 656.6 L671.9 655.0 L672.3 653.4 L672.6 651.8 L673.0 650.1 L673.4 648.5 L673.8 646.9 L674.1 645.3 L674.5 643.8 L674.9 642.2 L675.3 640.7 L675.6 639.1 L676.0 637.6 L676.4 636.1 L676.8 634.7 L677.1 633.2 L677.5 631.8 L677.9 630.4 L678.3 629.1 L678.6 627.8 L679.0 626.5 L679.4 625.2 L679.8 624.0 L680.1 622.8 L680.5 621.7 L680.9 620.5 L681.3 619.4 L681.6 618.4 L682.0 617.3 L682.4 616.3 L682.8 615.3 L683.1 614.3 L683.5 613.3 L683.9 612.4 L684.3 611.4 L684.6 610.5 L685.0 609.6 L685.4 608.7 L685.8 607.8 L686.1 606.8 L686.5 605.9 L686.9 605.1 L687.3 604.2 L687.6 603.3 L688.0 602.4 L688.4 601.5 L688.8 600.7 L689.1 599.8 L689.5 599.0 L689.9 598.2 L690.3 597.4 L690.6 596.6 L691.0 595.8 L691.4 595.1 L691.7 594.3 L692.1 593.6 L692.5 592.9 L692.9 592.2 L693.2 591.6 L693.6 591.0 L694.0 590.3 L694.4 589.7 L694.7 589.2 L695.1 588.6 L695.5 588.1 L695.9 587.6 L696.2 587.1 L696.6 586.7 L697.0 586.2 L697.4 585.8 L697.7 585.4 L698.1 585.1 L698.5 584.8 L698.9 584.4 L699.2 584.2 L699.6 583.9 L700.0 583.6 L700.4 583.4 L700.7 583.1 L701.1 582.9 L701.5 582.7 L701.9 582.6 L702.2 582.4 L702.6 582.3 L703.0 582.2 L703.4 582.1 L703.7 582.0 L704.1 582.0 L704.5 581.9 L704.9 581.9 L705.2 581.9 L705.6 582.0 L706.0 582.0 L706.4 582.1 L706.7 582.2 L707.1 582.3 L707.5 582.4 L707.9 582.6 L708.2 582.7 L708.6 582.9 L709.0 583.1 L709.4 583.3 L709.7 583.5 L710.1 583.8 L710.5 584.0 L710.9 584.3 L711.2 584.5 L711.6 584.8 L712.0 585.1 L712.4 585.4 L712.7 585.8 L713.1 586.1 L713.5 586.5 L713.9 586.8 L714.2 587.2 L714.6 587.6 L715.0 588.0 L715.4 588.4 L715.7 588.8 L716.1 589.3 L716.5 589.7 L716.9 590.2 L717.2 590.6 L717.6 591.1 L718.0 591.6 L718.4 592.1 L718.7 592.6 L719.1 593.2 L719.5 593.7 L719.9 594.2 L720.2 594.8 L720.6 595.4 L721.0 595.9 L721.4 596.5 L721.7 597.1 L722.1 597.7 L722.5 598.3 L722.8 598.9 L723.2 599.5 L723.6 600.1 L724.0 600.8 L724.3 601.4 L724.7 602.1 L725.1 602.7 L725.5 603.4 L725.8 604.0 L726.2 604.7 L726.6 605.4 L727.0 606.1 L727.3 606.8 L727.7 607.5 L728.1 608.2 L728.5 608.9 L728.8 609.6 L729.2 610.3 L729.6 611.0 L730.0 611.7 L730.3 612.4 L730.7 613.2 L731.1 613.9 L731.5 614.6 L731.8 615.4 L732.2 616.1 L732.6 616.8 L733.0 617.6 L733.3 618.3 L733.7 619.1 L734.1 619.8 L734.5 620.6 L734.8 621.3 L735.2 622.1 L735.6 622.8 L736.0 623.6 L736.3 624.4 L736.7 625.1 L737.1 625.9 L737.5 626.6 L737.8 627.4 L738.2 628.2 L738.6 628.9 L739.0 629.7 L739.3 630.4 L739.7 631.2 L740.1 632.0 L740.5 632.7 L740.8 633.5 L741.2 634.3 L741.6 635.0 L742.0 635.8 L742.3 636.6 L742.7 637.3 L743.1 638.1 L743.5 638.9 L743.8 639.6 L744.2 640.4 L744.6 641.2 L745.0 641.9 L745.3 642.7 L745.7 643.5 L746.1 644.2 L746.5 645.0 L746.8 645.8 L747.2 646.5 L747.6 647.3 L748.0 648.1 L748.3 648.8 L748.7 649.6 L749.1 650.4 L749.5 651.1 L749.8 651.9 L750.2 652.6 L750.6 653.4 L751.0 654.1 L751.3 654.9 L751.7 655.7 L752.1 656.4 L752.5 657.1 L752.8 657.9 L753.2 658.6 L753.6 659.4 L754.0 660.1 L754.3 660.8 L754.7 661.5 L755.1 662.3 L755.4 663.0 L755.8 663.7 L756.2 664.4 L756.6 665.1 L756.9 665.8 L757.3 666.5 L757.7 667.2 L758.1 667.9 L758.4 668.5 L758.8 669.2 L759.2 669.9 L759.6 670.5 L759.9 671.2 L760.3 671.8 L760.7 672.4 L761.1 673.1 L761.4 673.7 L761.8 674.3 L762.2 674.9 L762.6 675.4 L762.9 676.0 L763.3 676.5 L763.7 677.1 L764.1 677.6 L764.4 678.1 L764.8 678.6 L765.2 679.1 L765.6 679.6 L765.9 680.1 L766.3 680.5 L766.7 681.0 L767.1 681.4 L767.4 681.9 L767.8 682.3 L768.2 682.7 L768.6 683.1 L768.9 683.5 L769.3 683.9 L769.7 684.2 L770.1 684.6 L770.4 684.9 L770.8 685.3 L771.2 685.6 L771.6 685.9 L771.9 686.2 L772.3 686.5 L772.7 686.8 L773.1 687.1 L773.4 687.3 L773.8 687.6 L774.2 687.9 L774.6 688.1 L774.9 688.3 L775.3 688.6 L775.7 688.8 L776.1 689.0 L776.4 689.2 L776.8 689.4 L777.2 689.6 L777.6 689.7 L777.9 689.9 L778.3 690.1 L778.7 690.2 L779.1 690.3 L779.4 690.5 L779.8 690.6 L780.2 690.7 L780.6 690.8 L780.9 690.9 L781.3 691.0 L781.7 691.1 L782.1 691.1 L782.4 691.2 L782.8 691.2 L783.2 691.3 L783.6 691.3 L783.9 691.4 L784.3 691.4 L784.7 691.4 L785.1 691.4" fill="none" stroke="#0000ff" stroke-width="2.0" stroke-linejoin="round"/></g></g>
<text transform="translate(535.2 877.5) scale(0.81 1)" text-anchor="middle" font-size="12.8">0</text>
<text transform="translate(597.7 877.5) scale(0.81 1)" text-anchor="middle" font-size="12.8">5</text>
<text transform="translate(660.1 877.5) scale(0.81 1)" text-anchor="middle" font-size="12.8">10</text>
<text transform="translate(722.5 877.5) scale(0.81 1)" text-anchor="middle" font-size="12.8">15</text>
<text transform="translate(785.0 877.5) scale(0.81 1)" text-anchor="middle" font-size="12.8">20</text>
<text transform="translate(531.5 868.3) scale(0.81 1)" text-anchor="end" font-size="12.8">-0.1</text>
<text transform="translate(531.5 837.6) scale(0.81 1)" text-anchor="end" font-size="12.8">0</text>
<text transform="translate(531.5 806.9) scale(0.81 1)" text-anchor="end" font-size="12.8">0.1</text>
<text transform="translate(531.5 776.2) scale(0.81 1)" text-anchor="end" font-size="12.8">0.2</text>
<text transform="translate(531.5 745.5) scale(0.81 1)" text-anchor="end" font-size="12.8">0.3</text>
<text transform="translate(531.5 714.8) scale(0.81 1)" text-anchor="end" font-size="12.8">0.4</text>
<text transform="translate(531.5 684.0) scale(0.81 1)" text-anchor="end" font-size="12.8">0.5</text>
<text transform="translate(531.5 653.3) scale(0.81 1)" text-anchor="end" font-size="12.8">0.6</text>
<text transform="translate(531.5 622.6) scale(0.81 1)" text-anchor="end" font-size="12.8">0.7</text>
<text transform="translate(531.5 591.9) scale(0.81 1)" text-anchor="end" font-size="12.8">0.8</text>
<text transform="translate(531.5 561.2) scale(0.81 1)" text-anchor="end" font-size="12.8">0.9</text>
<text transform="translate(658.1 891.2) scale(0.905 1)" text-anchor="middle" word-spacing="1.2">t [s]</text>
<text transform="translate(504.1 710.5) rotate(-90) scale(0.955 1)" text-anchor="middle" font-size="11.3" word-spacing="1.4">ESM_beta_f64 [°/s]</text>
</g>
<g>
<rect x="864.3" y="556.9" width="249.8" height="307.1" fill="#fff"/>
<path d="M926.8 864.0 V556.9 M989.2 864.0 V556.9 M1051.6 864.0 V556.9" stroke="#242424" stroke-width="1" stroke-dasharray="2.4 2.6" fill="none" opacity="0.9"/>
<path d="M864.3 829.9 H1114.1 M864.3 795.8 H1114.1 M864.3 761.6 H1114.1 M864.3 727.5 H1114.1 M864.3 693.4 H1114.1 M864.3 659.3 H1114.1 M864.3 625.1 H1114.1 M864.3 591.0 H1114.1" stroke="#242424" stroke-width="0.95" stroke-dasharray="2.8 2.2" fill="none"/>
<path d="M864.3 864.0 v-3 M864.3 556.9 v3 M926.8 864.0 v-3 M926.8 556.9 v3 M989.2 864.0 v-3 M989.2 556.9 v3 M1051.6 864.0 v-3 M1051.6 556.9 v3 M1114.1 864.0 v-3 M1114.1 556.9 v3 M864.3 864.0 h3 M1114.1 864.0 h-3 M864.3 829.9 h3 M1114.1 829.9 h-3 M864.3 795.8 h3 M1114.1 795.8 h-3 M864.3 761.6 h3 M1114.1 761.6 h-3 M864.3 727.5 h3 M1114.1 727.5 h-3 M864.3 693.4 h3 M1114.1 693.4 h-3 M864.3 659.3 h3 M1114.1 659.3 h-3 M864.3 625.1 h3 M1114.1 625.1 h-3 M864.3 591.0 h3 M1114.1 591.0 h-3 M864.3 556.9 h3 M1114.1 556.9 h-3" stroke="#464646" stroke-width="1" fill="none"/>
<rect x="864.3" y="556.9" width="249.8" height="307.1" fill="none" stroke="#464646" stroke-width="1.45"/>
<g clip-path="url(#c7)"><g transform="translate(0 -0.35)"><path d="M864.3 829.9 L986.7 829.9 L987.3 830.7 L992.9 830.7 L993.6 829.9 L1044.2 829.9 L1044.8 830.9 L1099.1 830.9 L1099.7 829.9 L1114.1 829.9" fill="none" stroke="#0000ff" stroke-width="2.0" stroke-linejoin="round"/><path d="M864.3 829.6 L864.7 829.6 L865.0 829.6 L865.4 829.6 L865.8 829.6 L866.2 829.6 L866.5 829.6 L866.9 829.6 L867.3 829.6 L867.7 829.6 L868.0 829.6 L868.4 829.6 L868.8 829.6 L869.2 829.6 L869.5 829.6 L869.9 829.6 L870.3 829.6 L870.7 829.6 L871.0 829.6 L871.4 829.6 L871.8 829.6 L872.2 829.6 L872.5 829.6 L872.9 829.6 L873.3 829.6 L873.7 829.6 L874.0 829.6 L874.4 829.6 L874.8 829.6 L875.2 829.6 L875.5 829.6 L875.9 829.6 L876.3 829.6 L876.7 829.6 L877.0 829.6 L877.4 829.6 L877.8 829.6 L878.2 829.6 L878.5 829.6 L878.9 829.6 L879.3 829.6 L879.7 829.6 L880.0 829.6 L880.4 829.6 L880.8 829.6 L881.2 829.6 L881.5 829.6 L881.9 829.6 L882.3 829.6 L882.7 829.6 L883.0 829.6 L883.4 829.6 L883.8 829.6 L884.2 829.6 L884.5 829.6 L884.9 829.6 L885.3 829.6 L885.7 829.6 L886.0 829.6 L886.4 829.6 L886.8 829.6 L887.2 829.6 L887.5 829.6 L887.9 829.6 L888.3 829.6 L888.7 829.6 L889.0 829.6 L889.4 829.6 L889.8 829.6 L890.2 829.6 L890.5 829.6 L890.9 829.6 L891.3 829.6 L891.7 829.6 L892.0 829.6 L892.4 829.6 L892.8 829.6 L893.2 829.6 L893.5 829.6 L893.9 829.6 L894.3 829.6 L894.7 829.6 L895.0 829.6 L895.4 829.6 L895.8 829.6 L896.1 829.6 L896.5 829.6 L896.9 829.6 L897.3 829.6 L897.6 829.6 L898.0 829.6 L898.4 829.6 L898.8 829.6 L899.1 829.6 L899.5 829.6 L899.9 829.6 L900.3 829.6 L900.6 829.6 L901.0 829.6 L901.4 829.6 L901.8 829.6 L902.1 829.6 L902.5 829.6 L902.9 829.6 L903.3 829.6 L903.6 829.6 L904.0 829.6 L904.4 829.6 L904.8 829.6 L905.1 829.6 L905.5 829.6 L905.9 829.6 L906.3 829.6 L906.6 829.6 L907.0 829.6 L907.4 829.6 L907.8 829.6 L908.1 829.6 L908.5 829.6 L908.9 829.6 L909.3 829.6 L909.6 829.6 L910.0 829.6 L910.4 829.6 L910.8 829.6 L911.1 829.6 L911.5 829.6 L911.9 829.6 L912.3 829.6 L912.6 829.6 L913.0 829.6 L913.4 829.6 L913.8 829.6 L914.1 829.6 L914.5 829.6 L914.9 829.6 L915.3 829.6 L915.6 829.6 L916.0 829.6 L916.4 829.6 L916.8 829.6 L917.1 829.6 L917.5 829.6 L917.9 829.6 L918.3 829.6 L918.6 829.6 L919.0 829.6 L919.4 829.6 L919.8 829.6 L920.1 829.6 L920.5 829.6 L920.9 829.6 L921.3 829.6 L921.6 829.6 L922.0 829.6 L922.4 829.6 L922.8 829.6 L923.1 829.6 L923.5 829.6 L923.9 829.6 L924.3 829.6 L924.6 829.6 L925.0 829.6 L925.4 829.6 L925.8 829.6 L926.1 829.6 L926.5 829.6 L926.9 829.6 L927.2 829.6 L927.6 829.6 L928.0 829.6 L928.4 829.6 L928.7 829.6 L929.1 829.6 L929.5 829.6 L929.9 829.6 L930.2 829.6 L930.6 829.6 L931.0 829.6 L931.4 829.6 L931.7 829.6 L932.1 829.6 L932.5 829.6 L932.9 829.6 L933.2 829.6 L933.6 829.6 L934.0 829.6 L934.4 829.6 L934.7 829.6 L935.1 829.6 L935.5 829.6 L935.9 829.6 L936.2 829.6 L936.6 830.2 L937.0 830.8 L937.4 830.8 L937.7 830.8 L938.1 830.8 L938.5 830.8 L938.9 830.8 L939.2 830.8 L939.6 830.8 L940.0 830.8 L940.4 830.8 L940.7 830.8 L941.1 830.8 L941.5 830.8 L941.9 830.8 L942.2 830.8 L942.6 830.8 L943.0 830.8 L943.4 830.8 L943.7 830.8 L944.1 830.8 L944.5 830.8 L944.9 830.8 L945.2 830.8 L945.6 830.8 L946.0 830.8 L946.4 830.8 L946.7 830.8 L947.1 830.8 L947.5 830.7 L947.9 830.6 L948.2 830.5 L948.6 830.4 L949.0 830.2 L949.4 830.1 L949.7 829.9 L950.1 829.8 L950.5 829.6 L950.9 829.4 L951.2 829.2 L951.6 828.9 L952.0 828.6 L952.4 828.2 L952.7 827.8 L953.1 827.4 L953.5 826.9 L953.9 826.4 L954.2 825.8 L954.6 825.3 L955.0 824.8 L955.4 824.3 L955.7 823.8 L956.1 823.3 L956.5 822.7 L956.9 822.1 L957.2 821.5 L957.6 820.8 L958.0 820.1 L958.3 819.4 L958.7 818.6 L959.1 817.8 L959.5 817.0 L959.8 816.1 L960.2 815.1 L960.6 814.2 L961.0 813.1 L961.3 812.1 L961.7 811.0 L962.1 809.9 L962.5 808.7 L962.8 807.5 L963.2 806.3 L963.6 805.0 L964.0 803.8 L964.3 802.5 L964.7 801.1 L965.1 799.8 L965.5 798.4 L965.8 797.0 L966.2 795.6 L966.6 794.1 L967.0 792.6 L967.3 791.1 L967.7 789.5 L968.1 787.9 L968.5 786.3 L968.8 784.6 L969.2 783.0 L969.6 781.2 L970.0 779.5 L970.3 777.7 L970.7 775.9 L971.1 774.1 L971.5 772.2 L971.8 770.4 L972.2 768.5 L972.6 766.6 L973.0 764.7 L973.3 762.7 L973.7 760.8 L974.1 758.8 L974.5 756.9 L974.8 754.9 L975.2 752.9 L975.6 750.9 L976.0 748.9 L976.3 746.9 L976.7 744.8 L977.1 742.8 L977.5 740.8 L977.8 738.8 L978.2 736.8 L978.6 734.8 L979.0 732.8 L979.3 730.7 L979.7 728.7 L980.1 726.7 L980.5 724.7 L980.8 722.7 L981.2 720.6 L981.6 718.6 L982.0 716.5 L982.3 714.4 L982.7 712.4 L983.1 710.3 L983.5 708.2 L983.8 706.1 L984.2 704.0 L984.6 701.9 L985.0 699.8 L985.3 697.6 L985.7 695.5 L986.1 693.4 L986.5 691.3 L986.8 689.3 L987.2 687.2 L987.6 685.1 L988.0 683.0 L988.3 681.0 L989.1 680.3 L989.3 676.0 L989.2 708.3 L989.9 700.3 L990.9 690.4 L991.3 688.5 L991.7 686.6 L992.1 684.7 L992.4 682.8 L992.8 681.0 L993.2 679.2 L993.6 677.4 L993.9 675.6 L994.3 673.8 L994.7 672.1 L995.1 670.3 L995.4 668.6 L995.8 667.0 L996.2 665.3 L996.6 663.6 L996.9 661.9 L997.3 660.3 L997.7 658.6 L998.1 657.0 L998.4 655.3 L998.8 653.7 L999.2 652.1 L999.6 650.4 L999.9 648.8 L1000.3 647.1 L1000.7 645.5 L1001.1 643.9 L1001.4 642.3 L1001.8 640.6 L1002.2 639.0 L1002.6 637.3 L1002.9 635.7 L1003.3 634.0 L1003.7 632.4 L1004.1 630.9 L1004.4 629.3 L1004.8 627.8 L1005.2 626.3 L1005.6 624.8 L1005.9 623.3 L1006.3 621.9 L1006.7 620.5 L1007.1 619.2 L1007.4 617.9 L1007.8 616.6 L1008.2 615.3 L1008.6 614.1 L1008.9 612.9 L1009.3 611.7 L1009.7 610.5 L1010.1 609.4 L1010.4 608.3 L1010.8 607.2 L1011.2 606.1 L1011.6 605.0 L1011.9 604.0 L1012.3 602.9 L1012.7 601.9 L1013.1 600.9 L1013.4 599.8 L1013.8 598.8 L1014.2 597.8 L1014.6 596.8 L1014.9 595.8 L1015.3 594.8 L1015.7 593.8 L1016.1 592.8 L1016.4 591.9 L1016.8 590.9 L1017.2 589.9 L1017.6 589.0 L1017.9 588.0 L1018.3 587.1 L1018.7 586.2 L1019.1 585.3 L1019.4 584.4 L1019.8 583.5 L1020.2 582.7 L1020.5 581.9 L1020.9 581.2 L1021.3 580.5 L1021.7 579.8 L1022.0 579.2 L1022.4 578.6 L1022.8 578.0 L1023.2 577.4 L1023.5 576.8 L1023.9 576.3 L1024.3 575.8 L1024.7 575.3 L1025.0 574.8 L1025.4 574.4 L1025.8 573.9 L1026.2 573.5 L1026.5 573.1 L1026.9 572.8 L1027.3 572.4 L1027.7 572.1 L1028.0 571.8 L1028.4 571.5 L1028.8 571.3 L1029.2 571.0 L1029.5 570.8 L1029.9 570.6 L1030.3 570.4 L1030.7 570.2 L1031.0 570.0 L1031.4 569.9 L1031.8 569.8 L1032.2 569.7 L1032.5 569.6 L1032.9 569.5 L1033.3 569.5 L1033.7 569.5 L1034.0 569.5 L1034.4 569.5 L1034.8 569.6 L1035.2 569.7 L1035.5 569.8 L1035.9 569.9 L1036.3 570.0 L1036.7 570.2 L1037.0 570.3 L1037.4 570.5 L1037.8 570.7 L1038.2 570.9 L1038.5 571.2 L1038.9 571.4 L1039.3 571.7 L1039.7 572.1 L1040.0 572.5 L1040.4 573.0 L1040.8 573.4 L1041.2 573.9 L1041.5 574.3 L1041.9 574.8 L1042.3 575.3 L1042.7 575.8 L1043.0 576.3 L1043.4 576.9 L1043.8 577.4 L1044.2 578.0 L1044.5 578.5 L1044.9 579.1 L1045.3 579.7 L1045.7 580.3 L1046.0 581.0 L1046.4 581.6 L1046.8 582.2 L1047.2 582.9 L1047.5 583.5 L1047.9 584.2 L1048.3 584.9 L1048.7 585.6 L1049.0 586.2 L1049.4 586.9 L1049.8 587.7 L1050.2 588.4 L1050.5 589.1 L1050.9 589.8 L1051.3 590.6 L1051.6 591.3 L1052.0 592.1 L1052.4 592.8 L1052.8 593.6 L1053.1 594.4 L1053.5 595.2 L1053.9 596.0 L1054.3 596.7 L1054.6 597.5 L1055.0 598.4 L1055.4 599.2 L1055.8 600.0 L1056.1 600.8 L1056.5 601.6 L1056.9 602.5 L1057.3 603.3 L1057.6 604.1 L1058.0 605.0 L1058.4 605.8 L1058.8 606.6 L1059.1 607.5 L1059.5 608.3 L1059.9 609.2 L1060.3 610.1 L1060.6 610.9 L1061.0 611.8 L1061.4 612.6 L1061.8 613.5 L1062.1 614.4 L1062.5 615.2 L1062.9 616.1 L1063.3 617.0 L1063.6 617.8 L1064.0 618.7 L1064.4 619.6 L1064.8 620.4 L1065.1 621.3 L1065.5 622.1 L1065.9 623.0 L1066.3 623.8 L1066.6 624.7 L1067.0 625.5 L1067.4 626.4 L1067.8 627.2 L1068.1 628.1 L1068.5 628.9 L1068.9 629.8 L1069.3 630.6 L1069.6 631.5 L1070.0 632.3 L1070.4 633.2 L1070.8 634.0 L1071.1 634.9 L1071.5 635.7 L1071.9 636.6 L1072.3 637.4 L1072.6 638.3 L1073.0 639.1 L1073.4 640.0 L1073.8 640.8 L1074.1 641.6 L1074.5 642.5 L1074.9 643.3 L1075.3 644.2 L1075.6 645.0 L1076.0 645.9 L1076.4 646.7 L1076.8 647.5 L1077.1 648.4 L1077.5 649.2 L1077.9 650.0 L1078.3 650.9 L1078.6 651.7 L1079.0 652.5 L1079.4 653.3 L1079.8 654.2 L1080.1 655.0 L1080.5 655.8 L1080.9 656.6 L1081.3 657.4 L1081.6 658.2 L1082.0 659.0 L1082.4 659.8 L1082.8 660.6 L1083.1 661.4 L1083.5 662.2 L1083.9 663.0 L1084.2 663.7 L1084.6 664.5 L1085.0 665.2 L1085.4 666.0 L1085.7 666.7 L1086.1 667.4 L1086.5 668.1 L1086.9 668.9 L1087.2 669.6 L1087.6 670.3 L1088.0 671.0 L1088.4 671.6 L1088.7 672.3 L1089.1 673.0 L1089.5 673.7 L1089.9 674.3 L1090.2 674.9 L1090.6 675.6 L1091.0 676.2 L1091.4 676.8 L1091.7 677.4 L1092.1 678.0 L1092.5 678.5 L1092.9 679.1 L1093.2 679.6 L1093.6 680.2 L1094.0 680.7 L1094.4 681.2 L1094.7 681.7 L1095.1 682.2 L1095.5 682.7 L1095.9 683.2 L1096.2 683.6 L1096.6 684.1 L1097.0 684.5 L1097.4 684.9 L1097.7 685.4 L1098.1 685.8 L1098.5 686.2 L1098.9 686.6 L1099.2 686.9 L1099.6 687.3 L1100.0 687.6 L1100.4 688.0 L1100.7 688.3 L1101.1 688.6 L1101.5 688.9 L1101.9 689.2 L1102.2 689.5 L1102.6 689.8 L1103.0 690.1 L1103.4 690.4 L1103.7 690.6 L1104.1 690.9 L1104.5 691.1 L1104.9 691.4 L1105.2 691.6 L1105.6 691.8 L1106.0 692.0 L1106.4 692.2 L1106.7 692.4 L1107.1 692.6 L1107.5 692.8 L1107.9 692.9 L1108.2 693.1 L1108.6 693.2 L1109.0 693.4 L1109.4 693.5 L1109.7 693.6 L1110.1 693.8 L1110.5 693.9 L1110.9 694.0 L1111.2 694.1 L1111.6 694.1 L1112.0 694.2 L1112.4 694.3 L1112.7 694.4 L1113.1 694.4 L1113.5 694.5 L1113.9 694.5" fill="none" stroke="#ff0000" stroke-width="2.0" stroke-linejoin="round"/><path d="M864.3 829.9 L985.5 829.9 L1001.7 828.4 L1026.7 825.0 L1051.6 821.8 L1076.6 819.3 L1114.1 815.9" fill="none" stroke="#00ff00" stroke-width="2.0" stroke-linejoin="round"/></g></g>
<text transform="translate(864.0 877.5) scale(0.81 1)" text-anchor="middle" font-size="12.8">0</text>
<text transform="translate(926.5 877.5) scale(0.81 1)" text-anchor="middle" font-size="12.8">5</text>
<text transform="translate(988.9 877.5) scale(0.81 1)" text-anchor="middle" font-size="12.8">10</text>
<text transform="translate(1051.3 877.5) scale(0.81 1)" text-anchor="middle" font-size="12.8">15</text>
<text transform="translate(1113.8 877.5) scale(0.81 1)" text-anchor="middle" font-size="12.8">20</text>
<text transform="translate(860.3 868.3) scale(0.81 1)" text-anchor="end" font-size="12.8">-0.005</text>
<text transform="translate(860.3 834.2) scale(0.81 1)" text-anchor="end" font-size="12.8">0</text>
<text transform="translate(860.3 800.1) scale(0.81 1)" text-anchor="end" font-size="12.8">0.005</text>
<text transform="translate(860.3 765.9) scale(0.81 1)" text-anchor="end" font-size="12.8">0.01</text>
<text transform="translate(860.3 731.8) scale(0.81 1)" text-anchor="end" font-size="12.8">0.015</text>
<text transform="translate(860.3 697.7) scale(0.81 1)" text-anchor="end" font-size="12.8">0.02</text>
<text transform="translate(860.3 663.6) scale(0.81 1)" text-anchor="end" font-size="12.8">0.025</text>
<text transform="translate(860.3 629.4) scale(0.81 1)" text-anchor="end" font-size="12.8">0.03</text>
<text transform="translate(860.3 595.3) scale(0.81 1)" text-anchor="end" font-size="12.8">0.035</text>
<text transform="translate(860.3 561.2) scale(0.81 1)" text-anchor="end" font-size="12.8">0.04</text>
<text transform="translate(986.9 891.2) scale(0.905 1)" text-anchor="middle" word-spacing="1.2">t [s]</text>
<text transform="translate(820.6 710.5) rotate(-90) scale(0.955 1)" text-anchor="middle" font-size="11.3" word-spacing="1.4">Lw [rad]</text>
<rect x="1022.6" y="563.1" width="86.9" height="49.2" fill="#fff" stroke="#464646" stroke-width="1.1"/>
<path d="M1029.0 571.6 H1062.0" stroke="#0000ff" stroke-width="2.0"/>
<text transform="translate(1066.5 576.6) scale(0.887 1)" text-anchor="start">D-Anteil</text>
<path d="M1029.0 587.3 H1062.0" stroke="#ff0000" stroke-width="2.0"/>
<text transform="translate(1066.5 592.1) scale(0.887 1)" text-anchor="start">P-Anteil</text>
<path d="M1029.0 602.2 H1062.0" stroke="#00ff00" stroke-width="2.0"/>
<text transform="translate(1066.5 607.1) scale(0.887 1)" text-anchor="start">I-Anteil</text>
</g>
<g>
<rect x="1192.7" y="556.9" width="249.8" height="307.1" fill="#fff"/>
<path d="M1255.2 864.0 V556.9 M1317.6 864.0 V556.9 M1380.0 864.0 V556.9" stroke="#242424" stroke-width="1" stroke-dasharray="2.4 2.6" fill="none" opacity="0.9"/>
<path d="M1192.7 820.1 H1442.5 M1192.7 776.3 H1442.5 M1192.7 732.4 H1442.5 M1192.7 688.5 H1442.5 M1192.7 644.6 H1442.5 M1192.7 600.8 H1442.5" stroke="#242424" stroke-width="0.95" stroke-dasharray="2.8 2.2" fill="none"/>
<path d="M1192.7 864.0 v-3 M1192.7 556.9 v3 M1255.2 864.0 v-3 M1255.2 556.9 v3 M1317.6 864.0 v-3 M1317.6 556.9 v3 M1380.0 864.0 v-3 M1380.0 556.9 v3 M1442.5 864.0 v-3 M1442.5 556.9 v3 M1192.7 864.0 h3 M1442.5 864.0 h-3 M1192.7 820.1 h3 M1442.5 820.1 h-3 M1192.7 776.3 h3 M1442.5 776.3 h-3 M1192.7 732.4 h3 M1442.5 732.4 h-3 M1192.7 688.5 h3 M1442.5 688.5 h-3 M1192.7 644.6 h3 M1442.5 644.6 h-3 M1192.7 600.8 h3 M1442.5 600.8 h-3 M1192.7 556.9 h3 M1442.5 556.9 h-3" stroke="#464646" stroke-width="1" fill="none"/>
<rect x="1192.7" y="556.9" width="249.8" height="307.1" fill="none" stroke="#464646" stroke-width="1.45"/>
<g clip-path="url(#c8)"><g transform="translate(0 -0.35)"><path d="M1192.7 820.1 L1317.6 820.1 L1317.6 799.1 L1318.2 798.9 L1318.8 798.7 L1319.5 798.5 L1320.1 798.3 L1320.7 798.0 L1321.3 797.7 L1322.0 797.4 L1322.6 797.1 L1323.2 796.8 L1323.8 796.4 L1324.5 796.1 L1325.1 795.7 L1325.7 795.3 L1326.3 794.9 L1327.0 794.5 L1327.6 794.1 L1328.2 793.7 L1328.8 793.3 L1329.5 792.8 L1330.1 792.4 L1330.7 792.0 L1331.3 791.6 L1332.0 791.1 L1332.6 790.7 L1333.2 790.3 L1333.8 789.9 L1334.5 789.5 L1335.1 789.1 L1335.7 788.6 L1336.3 788.2 L1337.0 787.8 L1337.6 787.5 L1338.2 787.1 L1338.8 786.7 L1339.5 786.3 L1340.1 786.0 L1340.7 785.6 L1341.3 785.3 L1342.0 785.0 L1342.6 784.7 L1343.2 784.4 L1343.8 784.2 L1344.5 783.9 L1345.1 783.7 L1345.7 783.4 L1346.3 783.2 L1347.0 783.0 L1347.6 782.8 L1348.2 782.6 L1348.8 782.4 L1349.4 782.3 L1350.1 782.1 L1350.7 781.9 L1351.3 781.8 L1351.9 781.6 L1352.6 781.5 L1353.2 781.3 L1353.8 781.2 L1354.4 781.1 L1355.1 781.0 L1355.7 780.9 L1356.3 780.8 L1356.9 780.7 L1357.6 780.6 L1358.2 780.6 L1358.8 780.5 L1359.4 780.4 L1360.1 780.4 L1360.7 780.3 L1361.3 780.3 L1361.9 780.2 L1362.6 780.2 L1363.2 780.2 L1363.8 780.2 L1364.4 780.1 L1365.1 780.1 L1365.7 780.2 L1366.3 780.2 L1366.9 780.2 L1367.6 780.2 L1368.2 780.3 L1368.8 780.3 L1369.4 780.4 L1370.1 780.4 L1370.7 780.5 L1371.3 780.6 L1371.9 780.7 L1372.6 780.8 L1373.2 780.9 L1373.8 781.0 L1374.4 781.1 L1375.1 781.2 L1375.7 781.3 L1376.3 781.4 L1376.9 781.5 L1377.6 781.7 L1378.2 781.8 L1378.8 781.9 L1379.4 782.1 L1380.1 782.2 L1380.7 782.4 L1381.3 782.5 L1381.9 782.7 L1382.5 782.8 L1383.2 783.0 L1383.8 783.2 L1384.4 783.4 L1385.0 783.6 L1385.7 783.8 L1386.3 784.0 L1386.9 784.2 L1387.5 784.4 L1388.2 784.6 L1388.8 784.8 L1389.4 785.0 L1390.0 785.3 L1390.7 785.5 L1391.3 785.7 L1391.9 785.9 L1392.5 786.1 L1393.2 786.4 L1393.8 786.6 L1394.4 786.8 L1395.0 787.0 L1395.7 787.3 L1396.3 787.5 L1396.9 787.7 L1397.5 787.9 L1398.2 788.1 L1398.8 788.4 L1399.4 788.6 L1400.0 788.8 L1400.7 789.0 L1401.3 789.2 L1401.9 789.5 L1402.5 789.7 L1403.2 789.9 L1403.8 790.1 L1404.4 790.4 L1405.0 790.6 L1405.7 790.8 L1406.3 791.0 L1406.9 791.2 L1407.5 791.4 L1408.2 791.6 L1408.8 791.8 L1409.4 792.0 L1410.0 792.2 L1410.7 792.4 L1411.3 792.6 L1411.9 792.8 L1412.5 793.0 L1413.1 793.2 L1413.8 793.4 L1414.4 793.6 L1415.0 793.7 L1415.6 793.9 L1416.3 794.1 L1416.9 794.3 L1417.5 794.4 L1418.1 794.6 L1418.8 794.7 L1419.4 794.9 L1420.0 795.0 L1420.6 795.2 L1421.3 795.3 L1421.9 795.4 L1422.5 795.6 L1423.1 795.7 L1423.8 795.8 L1424.4 795.9 L1425.0 796.0 L1425.6 796.1 L1426.3 796.2 L1426.9 796.3 L1427.5 796.4 L1428.1 796.5 L1428.8 796.5 L1429.4 796.6 L1430.0 796.7 L1430.6 796.8 L1431.3 796.8 L1431.9 796.9 L1432.5 797.0 L1433.1 797.0 L1433.8 797.1 L1434.4 797.1 L1435.0 797.2 L1435.6 797.3 L1436.3 797.3 L1436.9 797.4 L1437.5 797.4 L1438.1 797.5 L1438.8 797.5 L1439.4 797.5 L1440.0 797.6 L1440.6 797.6 L1441.3 797.7 L1441.9 797.7 L1442.5 797.7" fill="none" stroke="#0000ff" stroke-width="2.0" stroke-linejoin="round"/><path d="M1317.8 820.1 L1317.8 799.3" fill="none" stroke="#0000ff" stroke-width="2.8" stroke-linejoin="round"/><path d="M1192.7 820.1 L1193.2 820.1 L1193.7 820.1 L1194.2 820.1 L1194.7 820.1 L1195.2 820.1 L1195.7 820.1 L1196.2 820.1 L1196.7 820.1 L1197.2 820.1 L1197.7 820.1 L1198.2 820.1 L1198.7 820.1 L1199.2 820.1 L1199.7 820.1 L1200.2 820.1 L1200.7 820.1 L1201.2 820.1 L1201.7 820.1 L1202.2 820.1 L1202.7 820.1 L1203.2 820.1 L1203.7 820.1 L1204.2 820.1 L1204.7 820.1 L1205.2 820.1 L1205.7 820.1 L1206.2 820.1 L1206.7 820.1 L1207.2 820.1 L1207.7 820.1 L1208.2 820.1 L1208.7 820.1 L1209.2 820.1 L1209.7 820.1 L1210.2 820.1 L1210.7 820.1 L1211.2 820.1 L1211.7 820.1 L1212.2 820.1 L1212.7 820.1 L1213.2 820.1 L1213.7 820.1 L1214.2 820.1 L1214.7 820.1 L1215.2 820.1 L1215.7 820.1 L1216.2 820.1 L1216.7 820.1 L1217.2 820.1 L1217.7 820.1 L1218.2 820.1 L1218.7 820.1 L1219.2 820.1 L1219.7 820.1 L1220.2 820.1 L1220.7 820.1 L1221.2 820.1 L1221.7 820.1 L1222.2 820.1 L1222.7 820.1 L1223.2 820.1 L1223.7 820.1 L1224.2 820.1 L1224.7 820.1 L1225.2 820.1 L1225.7 820.1 L1226.2 820.1 L1226.7 820.1 L1227.2 820.1 L1227.7 820.1 L1228.2 820.1 L1228.7 820.1 L1229.2 820.1 L1229.7 820.1 L1230.2 820.1 L1230.7 820.1 L1231.2 820.1 L1231.7 820.1 L1232.2 820.1 L1232.7 820.1 L1233.2 820.1 L1233.7 820.1 L1234.2 820.1 L1234.7 820.1 L1235.2 820.1 L1235.7 820.1 L1236.2 820.1 L1236.7 820.1 L1237.2 820.1 L1237.7 820.1 L1238.2 820.1 L1238.7 820.1 L1239.2 820.1 L1239.7 820.1 L1240.2 820.1 L1240.7 820.1 L1241.2 820.1 L1241.7 820.1 L1242.2 820.1 L1242.7 820.1 L1243.2 820.1 L1243.7 820.1 L1244.2 820.1 L1244.7 820.1 L1245.2 820.1 L1245.7 820.1 L1246.2 820.1 L1246.7 820.1 L1247.2 820.1 L1247.7 820.1 L1248.2 820.1 L1248.7 820.1 L1249.2 820.1 L1249.7 820.1 L1250.2 820.1 L1250.7 820.1 L1251.2 820.1 L1251.7 820.1 L1252.2 820.1 L1252.7 820.1 L1253.2 820.1 L1253.7 820.1 L1254.2 820.1 L1254.7 820.1 L1255.2 820.1 L1255.6 820.1 L1256.1 820.1 L1256.6 820.1 L1257.1 820.1 L1257.6 820.1 L1258.1 820.1 L1258.6 820.1 L1259.1 820.1 L1259.6 820.1 L1260.1 820.1 L1260.6 820.1 L1261.1 820.1 L1261.6 820.1 L1262.1 820.1 L1262.6 820.1 L1263.1 820.1 L1263.6 820.1 L1264.1 820.1 L1264.6 820.1 L1265.1 820.1 L1265.6 820.1 L1266.1 820.1 L1266.6 820.4 L1267.1 821.0 L1267.6 821.0 L1268.1 821.0 L1268.6 821.0 L1269.1 821.0 L1269.6 821.0 L1270.1 821.0 L1270.6 821.0 L1271.1 821.0 L1271.6 821.0 L1272.1 821.0 L1272.6 821.0 L1273.1 821.0 L1273.6 821.0 L1274.1 821.0 L1274.6 821.0 L1275.1 821.0 L1275.6 821.0 L1276.1 821.0 L1276.6 821.0 L1277.1 820.9 L1277.6 820.8 L1278.1 820.7 L1278.6 820.5 L1279.1 820.3 L1279.6 820.1 L1280.1 819.9 L1280.6 819.5 L1281.1 819.0 L1281.6 818.4 L1282.1 817.9 L1282.6 817.3 L1283.1 816.7 L1283.6 816.0 L1284.1 815.3 L1284.6 814.6 L1285.1 813.8 L1285.6 813.0 L1286.1 812.1 L1286.6 811.2 L1287.1 810.2 L1287.6 809.2 L1288.1 808.2 L1288.6 807.1 L1289.1 805.9 L1289.6 804.7 L1290.1 803.5 L1290.6 802.1 L1291.1 800.8 L1291.6 799.3 L1292.1 797.8 L1292.6 796.3 L1293.1 794.7 L1293.6 793.1 L1294.1 791.4 L1294.6 789.6 L1295.1 787.8 L1295.6 785.9 L1296.1 784.0 L1296.6 782.0 L1297.1 780.0 L1297.6 778.0 L1298.1 775.9 L1298.6 773.8 L1299.1 771.6 L1299.6 769.4 L1300.1 767.2 L1300.6 765.0 L1301.1 762.8 L1301.6 760.5 L1302.1 758.3 L1302.6 756.0 L1303.1 753.8 L1303.6 751.6 L1304.1 749.3 L1304.6 747.1 L1305.1 744.9 L1305.6 742.6 L1306.1 740.4 L1306.6 738.2 L1307.1 735.9 L1307.6 733.6 L1308.1 731.4 L1308.6 729.1 L1309.1 726.9 L1309.6 724.6 L1310.1 722.4 L1310.6 720.1 L1311.1 717.9 L1311.6 715.6 L1312.1 713.4 L1312.6 711.2 L1313.1 709.0 L1313.6 706.8 L1314.1 704.6 L1314.6 702.4 L1315.1 700.2 L1315.6 698.0 L1316.1 695.8 L1316.6 693.6 L1317.1 691.4 L1317.6 689.2 L1318.1 687.0 L1318.6 684.8 L1319.1 682.6 L1319.6 680.4 L1320.1 678.2 L1320.6 676.0 L1321.1 673.8 L1321.6 671.6 L1322.1 669.4 L1322.6 667.2 L1323.1 665.0 L1323.6 662.9 L1324.1 660.8 L1324.6 658.7 L1325.1 656.6 L1325.6 654.5 L1326.1 652.5 L1326.6 650.5 L1327.1 648.5 L1327.6 646.5 L1328.1 644.6 L1328.6 642.7 L1329.1 640.8 L1329.6 639.0 L1330.1 637.2 L1330.6 635.4 L1331.1 633.7 L1331.6 631.9 L1332.1 630.2 L1332.6 628.6 L1333.1 626.9 L1333.6 625.3 L1334.1 623.6 L1334.6 622.0 L1335.1 620.4 L1335.6 618.8 L1336.1 617.2 L1336.6 615.6 L1337.1 614.1 L1337.6 612.5 L1338.1 611.0 L1338.6 609.5 L1339.1 608.1 L1339.6 606.7 L1340.1 605.3 L1340.6 603.9 L1341.1 602.7 L1341.6 601.4 L1342.1 600.2 L1342.6 599.1 L1343.1 598.0 L1343.6 596.9 L1344.1 595.9 L1344.6 594.9 L1345.1 593.9 L1345.6 593.0 L1346.1 592.2 L1346.6 591.3 L1347.1 590.6 L1347.6 589.8 L1348.1 589.1 L1348.6 588.5 L1349.1 587.8 L1349.6 587.3 L1350.1 586.7 L1350.6 586.2 L1351.1 585.7 L1351.6 585.2 L1352.1 584.8 L1352.6 584.4 L1353.1 584.0 L1353.6 583.6 L1354.1 583.2 L1354.6 582.9 L1355.1 582.6 L1355.6 582.2 L1356.1 581.9 L1356.6 581.7 L1357.1 581.4 L1357.6 581.2 L1358.1 580.9 L1358.6 580.7 L1359.1 580.6 L1359.6 580.4 L1360.1 580.3 L1360.6 580.2 L1361.1 580.1 L1361.6 580.1 L1362.1 580.1 L1362.6 580.1 L1363.1 580.1 L1363.6 580.2 L1364.1 580.3 L1364.6 580.4 L1365.1 580.6 L1365.6 580.7 L1366.1 580.9 L1366.6 581.1 L1367.1 581.4 L1367.6 581.6 L1368.1 581.9 L1368.6 582.2 L1369.1 582.5 L1369.6 582.8 L1370.1 583.2 L1370.6 583.5 L1371.1 583.9 L1371.6 584.3 L1372.1 584.6 L1372.6 585.1 L1373.1 585.5 L1373.6 585.9 L1374.1 586.4 L1374.6 586.9 L1375.1 587.4 L1375.6 588.0 L1376.1 588.6 L1376.6 589.2 L1377.1 589.8 L1377.6 590.5 L1378.1 591.2 L1378.6 592.0 L1379.1 592.7 L1379.6 593.5 L1380.0 594.3 L1380.5 595.2 L1381.0 596.0 L1381.5 596.9 L1382.0 597.8 L1382.5 598.7 L1383.0 599.6 L1383.5 600.6 L1384.0 601.6 L1384.5 602.6 L1385.0 603.6 L1385.5 604.6 L1386.0 605.7 L1386.5 606.8 L1387.0 607.9 L1387.5 609.0 L1388.0 610.1 L1388.5 611.2 L1389.0 612.4 L1389.5 613.5 L1390.0 614.7 L1390.5 615.8 L1391.0 616.9 L1391.5 618.1 L1392.0 619.2 L1392.5 620.3 L1393.0 621.4 L1393.5 622.5 L1394.0 623.6 L1394.5 624.7 L1395.0 625.8 L1395.5 626.8 L1396.0 627.9 L1396.5 629.0 L1397.0 630.0 L1397.5 631.1 L1398.0 632.1 L1398.5 633.2 L1399.0 634.2 L1399.5 635.2 L1400.0 636.2 L1400.5 637.3 L1401.0 638.3 L1401.5 639.3 L1402.0 640.3 L1402.5 641.3 L1403.0 642.3 L1403.5 643.2 L1404.0 644.2 L1404.5 645.2 L1405.0 646.1 L1405.5 647.1 L1406.0 648.1 L1406.5 649.0 L1407.0 650.0 L1407.5 650.9 L1408.0 651.8 L1408.5 652.8 L1409.0 653.7 L1409.5 654.6 L1410.0 655.5 L1410.5 656.4 L1411.0 657.3 L1411.5 658.2 L1412.0 659.1 L1412.5 659.9 L1413.0 660.8 L1413.5 661.7 L1414.0 662.5 L1414.5 663.3 L1415.0 664.1 L1415.5 665.0 L1416.0 665.8 L1416.5 666.6 L1417.0 667.3 L1417.5 668.1 L1418.0 668.9 L1418.5 669.6 L1419.0 670.3 L1419.5 671.0 L1420.0 671.7 L1420.5 672.4 L1421.0 673.1 L1421.5 673.7 L1422.0 674.4 L1422.5 675.0 L1423.0 675.6 L1423.5 676.2 L1424.0 676.8 L1424.5 677.4 L1425.0 677.9 L1425.5 678.4 L1426.0 679.0 L1426.5 679.5 L1427.0 680.0 L1427.5 680.5 L1428.0 680.9 L1428.5 681.4 L1429.0 681.8 L1429.5 682.2 L1430.0 682.6 L1430.5 683.0 L1431.0 683.4 L1431.5 683.8 L1432.0 684.1 L1432.5 684.5 L1433.0 684.8 L1433.5 685.1 L1434.0 685.4 L1434.5 685.7 L1435.0 686.0 L1435.5 686.3 L1436.0 686.5 L1436.5 686.8 L1437.0 687.0 L1437.5 687.2 L1438.0 687.4 L1438.5 687.6 L1439.0 687.8 L1439.5 687.9 L1440.0 688.1 L1440.5 688.2 L1441.0 688.3 L1441.5 688.4 L1442.0 688.5 L1442.5 688.5" fill="none" stroke="#ff0000" stroke-width="2.0" stroke-linejoin="round"/></g></g>
<text transform="translate(1192.4 877.5) scale(0.81 1)" text-anchor="middle" font-size="12.8">0</text>
<text transform="translate(1254.9 877.5) scale(0.81 1)" text-anchor="middle" font-size="12.8">5</text>
<text transform="translate(1317.3 877.5) scale(0.81 1)" text-anchor="middle" font-size="12.8">10</text>
<text transform="translate(1379.8 877.5) scale(0.81 1)" text-anchor="middle" font-size="12.8">15</text>
<text transform="translate(1442.2 877.5) scale(0.81 1)" text-anchor="middle" font-size="12.8">20</text>
<text transform="translate(1188.7 868.3) scale(0.81 1)" text-anchor="end" font-size="12.8">-0.05</text>
<text transform="translate(1188.7 824.4) scale(0.81 1)" text-anchor="end" font-size="12.8">0</text>
<text transform="translate(1188.7 780.6) scale(0.81 1)" text-anchor="end" font-size="12.8">0.05</text>
<text transform="translate(1188.7 736.7) scale(0.81 1)" text-anchor="end" font-size="12.8">0.1</text>
<text transform="translate(1188.7 692.8) scale(0.81 1)" text-anchor="end" font-size="12.8">0.15</text>
<text transform="translate(1188.7 648.9) scale(0.81 1)" text-anchor="end" font-size="12.8">0.2</text>
<text transform="translate(1188.7 605.1) scale(0.81 1)" text-anchor="end" font-size="12.8">0.25</text>
<text transform="translate(1188.7 561.2) scale(0.81 1)" text-anchor="end" font-size="12.8">0.3</text>
<text transform="translate(1315.3 891.2) scale(0.905 1)" text-anchor="middle" word-spacing="1.2">t [s]</text>
<text transform="translate(1154.6 710.5) rotate(-90) scale(0.955 1)" text-anchor="middle" font-size="11.3" word-spacing="1.4">Querablage [m]</text>
<rect x="1313.3" y="562.7" width="124.3" height="34.6" fill="#fff" stroke="#464646" stroke-width="1.1"/>
<path d="M1319.3 571.6 H1352.7" stroke="#0000ff" stroke-width="2.0"/>
<text transform="translate(1356.0 576.5) scale(0.878 1)" text-anchor="start">Ist-Querablage</text>
<path d="M1319.3 587.3 H1352.7" stroke="#ff0000" stroke-width="2.0"/>
<text transform="translate(1356.0 591.9) scale(0.878 1)" text-anchor="start">Soll-Querablage</text>
</g>
</svg>
</body></html>
